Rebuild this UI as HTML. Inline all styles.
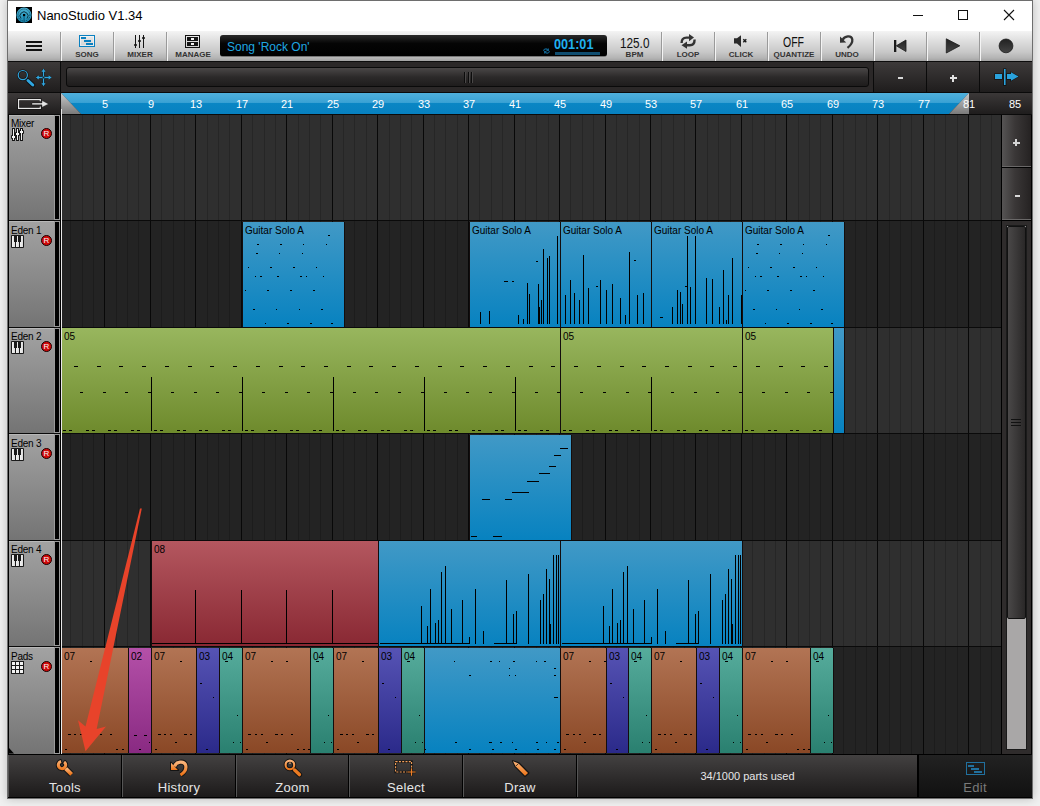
<!DOCTYPE html><html><head><meta charset='utf-8'><style>
*{box-sizing:border-box;margin:0;padding:0}
html,body{width:1040px;height:806px;overflow:hidden;background:#f0f0f0;font-family:"Liberation Sans", sans-serif}
.a{position:absolute}
.t{position:absolute;white-space:nowrap;line-height:1}
.sep{position:absolute;top:32px;width:2px;height:29px;background:#9a9a9a;border-right:1px solid #f4f4f4}
.lbl{position:absolute;top:51px;font-size:8px;font-weight:bold;color:#333;text-align:center;line-height:1;white-space:nowrap}
.db{position:absolute;background:linear-gradient(#3d3a3a,#1f1d1d);}
.hdr{position:absolute;left:8px;width:47px;background:linear-gradient(#a2a2a2,#747474);border-top:1px solid #b8b8b8}
.hname{position:absolute;left:11px;font-size:10px;color:#000;line-height:1}
.rec{position:absolute;left:41px;width:11px;height:11px;border-radius:50%;background:#d00808;border:1px solid #1a0000;color:#f4f4f4;font-size:8px;text-align:center;line-height:9px}
.clip{position:absolute;border-right:1px solid #130d0d}
.cl{position:absolute;left:2px;top:4px;font-size:10px;color:#000;line-height:1;white-space:nowrap}
.n{position:absolute;background:#000}
.bb{position:absolute;top:755px;height:42px;background:linear-gradient(#434141,#1c1a1a);border-left:1px solid #555;border-right:1px solid #000}
.bt{position:absolute;top:781px;width:100%;text-align:center;font-size:13px;color:#e6e6e6;line-height:1}
</style></head><body>
<div class='a' style='left:7px;top:0;width:1026px;height:799px;box-shadow:0 0 9px rgba(0,0,0,.22);background:#1a1818;border:1px solid #6e6e6e'></div>
<div class='a' style='left:8px;top:1px;width:1024px;height:30px;background:#fff'></div>
<svg class='a' style='left:16px;top:7px' width='16' height='16'><defs><linearGradient id='ig' x1='0' y1='0' x2='0' y2='1'><stop offset='0' stop-color='#4cb4d6'/><stop offset='1' stop-color='#1685ae'/></linearGradient></defs><rect width='16' height='16' fill='#000'/><circle cx='8' cy='8' r='7.6' fill='url(#ig)'/><circle cx='8' cy='8' r='6' fill='none' stroke='#0a2a38' stroke-width='.8' stroke-dasharray='1 1'/><path d='M5 11.5A4 4 0 1 1 11 11.5' fill='none' stroke='#0a2a38' stroke-width='.9'/><rect x='7' y='7' width='2.2' height='2.2' fill='#000'/><rect x='7.5' y='9' width='1.2' height='6.5' fill='#0e5f80'/></svg>
<div class='t' style='left:37px;top:9px;font-size:13px;color:#000'>NanoStudio V1.34</div>
<div class='a' style='left:913px;top:15px;width:10px;height:1px;background:#111'></div>
<div class='a' style='left:958px;top:10px;width:10px;height:10px;border:1px solid #111'></div>
<svg class='a' style='left:1003px;top:9px' width='12' height='12'><path d='M1 1L11 11M11 1L1 11' stroke='#111' stroke-width='1.1'/></svg>
<div class='a' style='left:8px;top:31px;width:1024px;height:31px;background:linear-gradient(#f4f4f4,#e0e0e0 30%,#c8c8c8 70%,#b4b4b4 90%,#a2a2a2);border-bottom:1px solid #0c0c0c'></div>
<div class='sep' style='left:60px'></div>
<div class='sep' style='left:113px'></div>
<div class='sep' style='left:166px'></div>
<div class='sep' style='left:661px'></div>
<div class='sep' style='left:714px'></div>
<div class='sep' style='left:767px'></div>
<div class='sep' style='left:820px'></div>
<div class='sep' style='left:873px'></div>
<div class='sep' style='left:926px'></div>
<div class='sep' style='left:979px'></div>
<div class='a' style='left:26px;top:41px;width:16px;height:2px;background:#111'></div>
<div class='a' style='left:26px;top:45px;width:16px;height:2px;background:#111'></div>
<div class='a' style='left:26px;top:49px;width:16px;height:2px;background:#111'></div>
<div class='a' style='left:79px;top:35px;width:16px;height:12px;border:1px solid #0a80c0;box-shadow:inset 0 0 0 1px rgba(255,255,255,.5)'></div>
<div class='a' style='left:81px;top:37px;width:5px;height:2px;background:#0a80c0'></div>
<div class='a' style='left:84px;top:40px;width:7px;height:2px;background:#0a80c0'></div>
<div class='a' style='left:86px;top:43px;width:7px;height:2px;background:#0a80c0'></div>
<div class='lbl' style='left:61px;width:52px'>SONG</div>
<div class='a' style='left:135px;top:35px;width:1px;height:13px;background:#151515'></div>
<div class='a' style='left:134px;top:44px;width:3px;height:2px;background:#151515;border-radius:1px'></div>
<div class='a' style='left:139px;top:35px;width:1px;height:13px;background:#151515'></div>
<div class='a' style='left:138px;top:40px;width:3px;height:2px;background:#151515;border-radius:1px'></div>
<div class='a' style='left:143px;top:35px;width:1px;height:13px;background:#151515'></div>
<div class='a' style='left:142px;top:37px;width:3px;height:2px;background:#151515;border-radius:1px'></div>
<div class='lbl' style='left:114px;width:52px'>MIXER</div>
<div class='a' style='left:185px;top:35px;width:15px;height:13px;border:1px solid #111'></div>
<div class='a' style='left:187px;top:37px;width:11px;height:4px;background:#151515'></div>
<div class='a' style='left:187px;top:42px;width:11px;height:4px;background:#151515'></div>
<div class='a' style='left:191px;top:38px;width:3px;height:2px;background:#f4f4f4'></div>
<div class='a' style='left:191px;top:43px;width:3px;height:2px;background:#f4f4f4'></div>
<div class='lbl' style='left:167px;width:52px'>MANAGE</div>
<div class='a' style='left:220px;top:35px;width:387px;height:22px;border-radius:3px;background:linear-gradient(#2a2a2a,#050505 40%,#000);border-bottom:1px solid #777'></div>
<div class='t' style='left:227px;top:41px;font-size:12px;color:#1fa8e2'>Song 'Rock On'</div>
<div class='t' style='left:554px;top:36px;font-size:15px;font-weight:bold;color:#1fb0ee;transform:scaleX(.845);transform-origin:0 0'>001:01</div>
<div class='a' style='left:555px;top:52px;width:45px;height:3px;background:#0f4d70'></div>
<svg class='a' style='left:542px;top:47px' width='9' height='8'><path d='M1 4a3 3 0 0 1 5-2l1-1v3h-3l1-1a2 2 0 0 0-3 1zM8 4a3 3 0 0 1-5 2l-1 1v-3h3l-1 1a2 2 0 0 0 3-1z' fill='#0f5f8a'/></svg>
<div class='t' style='left:620px;top:36px;font-size:14px;color:#111;transform:scaleX(.84);transform-origin:0 0'>125.0</div>
<div class='lbl' style='left:608px;width:53px'>BPM</div>
<svg class='a' style='left:676px;top:31px' width='24' height='18'><g fill='none' stroke='#333' stroke-width='2.4'><path d='M5.6 12 Q5.6 6.6 10.5 6.6 H14'/><path d='M18.6 8.5 Q18.6 14.2 13.8 14.2 H10'/></g><g fill='#333'><path d='M13 3L18 6.6L13 10.2z'/><path d='M11 10.6L5.5 14.2L11 17.8z'/></g></svg>
<div class='lbl' style='left:662px;width:52px'>LOOP</div>
<svg class='a' style='left:729px;top:31px' width='24' height='18'><path d='M5 7.2H8L12 4.2V15.9L8 12.6H5z' fill='#2a2a2a'/><path d='M14.3 8.3L17.3 11.3M17.3 8.3L14.3 11.3' stroke='#1a1a1a' stroke-width='1.4'/></svg>
<div class='lbl' style='left:715px;width:52px'>CLICK</div>
<div class='t' style='left:783px;top:35px;font-size:14px;color:#111;transform:scaleX(.75);transform-origin:0 0'>OFF</div>
<div class='lbl' style='left:768px;width:52px'>QUANTIZE</div>
<svg class='a' style='left:834px;top:31px' width='24' height='18'><path d='M6 5.5V11.7L12.2 11.5z' fill='#333'/><path d='M8.5 9 C10.5 4.8 17.5 3.8 18.3 8.5 C18.7 11.8 16.5 14.5 13.5 16.8' fill='none' stroke='#333' stroke-width='2.3'/></svg>
<div class='lbl' style='left:821px;width:52px'>UNDO</div>
<svg class='a' style='left:885px;top:33px' width='130' height='26'><defs><linearGradient id='tg' x1='0' y1='0' x2='0' y2='1'><stop offset='0' stop-color='#222'/><stop offset='1' stop-color='#444'/></linearGradient></defs><rect x='9' y='7' width='2.3' height='12' fill='#1a1a1a'/><path d='M21 7V18.5L11.3 12.8z' fill='url(#tg)' stroke='#1a1a1a' stroke-width='.8'/><path d='M61.3 5.8V20L74.8 12.8z' fill='url(#tg)' stroke='#1a1a1a' stroke-width='.8'/><circle cx='121' cy='12.9' r='6.9' fill='url(#tg)' stroke='#1a1a1a' stroke-width='.8'/></svg>
<div class='a' style='left:8px;top:62px;width:1024px;height:31px;background:#0a0a0a'></div>
<div class='db' style='left:8px;top:62px;width:52px;height:30px'></div>
<div class='a' style='left:61px;top:62px;width:812px;height:30px;background:#2b2828'></div>
<div class='a' style='left:66px;top:67px;width:803px;height:20px;border-radius:3px;border:1px solid #0a0a0a;background:linear-gradient(#4a4747,#2c2a2a 50%,#1e1c1c)'></div>
<div class='a' style='left:464px;top:72px;width:1px;height:11px;background:#0c0c0c;box-shadow:1px 0 0 #4a4848'></div>
<div class='a' style='left:468px;top:72px;width:1px;height:11px;background:#0c0c0c;box-shadow:1px 0 0 #4a4848'></div>
<div class='a' style='left:471px;top:72px;width:1px;height:11px;background:#0c0c0c;box-shadow:1px 0 0 #4a4848'></div>
<div class='db' style='left:874px;top:62px;width:52px;height:30px'></div>
<div class='db' style='left:927px;top:62px;width:52px;height:30px'></div>
<div class='db' style='left:980px;top:62px;width:52px;height:30px'></div>
<div class='a' style='left:898px;top:77px;width:5px;height:2px;background:#d8d8d8'></div>
<div class='a' style='left:950px;top:77px;width:7px;height:2px;background:#e0e0e0'></div><div class='a' style='left:952px;top:75px;width:2px;height:7px;background:#e0e0e0'></div>
<svg class='a' style='left:10px;top:64px' width='46' height='28'><g fill='none' stroke='#000' stroke-opacity='.55'><circle cx='12.8' cy='11.1' r='4.6' stroke-width='2.6'/><line x1='18' y1='16.5' x2='22.8' y2='21' stroke-width='4.8' stroke-linecap='round'/><path d='M33.5 5.5V21.5M26.2 13.5H41' stroke-width='3'/></g><g fill='none' stroke='#2fa6e0'><circle cx='12.8' cy='11.1' r='4.6' stroke-width='1.2'/><line x1='18' y1='16.5' x2='22.8' y2='21' stroke-width='3' stroke-linecap='round'/><path d='M33.5 6.5V20.5M27 13.5H40.5' stroke-width='1.3'/></g><g fill='#2fa6e0'><path d='M33.5 4.8l-2 3h4z'/><path d='M33.5 22.2l-2-3h4z'/><path d='M25.8 13.5l3-2v4z'/><path d='M41.6 13.5l-3-2v4z'/></g><circle cx='33.5' cy='13.5' r='1' fill='#222'/></svg>
<svg class='a' style='left:985px;top:64px' width='46' height='28'><g fill='#000' fill-opacity='.6'><rect x='9.3' y='9.3' width='8.4' height='6.4'/><rect x='18.3' y='4.3' width='3' height='17.4'/><path d='M21.3 9.3H25.3V7.2L34.5 12.5L25.3 17.8V15.7H21.3z'/></g><g fill='#2aa2dc'><rect x='10' y='10' width='7' height='5'/><rect x='19' y='5' width='1.6' height='16'/><path d='M22 10H26V8.3L33.6 12.5L26 16.7V15H22z'/></g></svg>
<div class='db' style='left:8px;top:93px;width:52px;height:21px'></div>
<svg class='a' style='left:10px;top:92px' width='46' height='22'><path d='M30.3 9.3V7.6H8.6V16.3H30.3V14.6' fill='none' stroke='#000' stroke-opacity='.6' stroke-width='2.6'/><path d='M30.3 9.3V7.6H8.6V16.3H30.3V14.6' fill='none' stroke='#e6e6e6' stroke-width='1.2'/><path d='M22 11H32V8.6L38.5 11.9L32 15.2V12.8H22z' fill='#e6e6e6' stroke='#000' stroke-opacity='.5' stroke-width='.6'/></svg>
<div class='a' style='left:61px;top:93px;width:971px;height:21px;background:linear-gradient(#3b3838,#1f1d1d)'></div>
<div class='a' style='left:61px;top:93px;width:908px;height:21px;background:linear-gradient(#4fb0dc,#3aa2d4 45%,#0a86c4 50%,#0781c0);clip-path:polygon(0 0,100% 0,calc(100% - 20px) 100%,20px 100%)'></div>
<div class='a' style='left:61px;top:93px;width:20px;height:21px;background:linear-gradient(#c8c8c8,#7a7a7a);clip-path:polygon(0 0,100% 100%,0 100%)'></div>
<div class='a' style='left:949px;top:93px;width:20px;height:21px;background:linear-gradient(#c8c8c8,#7a7a7a);clip-path:polygon(100% 0,100% 100%,0 100%)'></div>
<div class='t' style='left:90px;top:99px;width:30px;text-align:center;font-size:11px;color:#fff'>5</div>
<div class='t' style='left:136px;top:99px;width:30px;text-align:center;font-size:11px;color:#fff'>9</div>
<div class='t' style='left:181px;top:99px;width:30px;text-align:center;font-size:11px;color:#fff'>13</div>
<div class='t' style='left:227px;top:99px;width:30px;text-align:center;font-size:11px;color:#fff'>17</div>
<div class='t' style='left:272px;top:99px;width:30px;text-align:center;font-size:11px;color:#fff'>21</div>
<div class='t' style='left:318px;top:99px;width:30px;text-align:center;font-size:11px;color:#fff'>25</div>
<div class='t' style='left:363px;top:99px;width:30px;text-align:center;font-size:11px;color:#fff'>29</div>
<div class='t' style='left:409px;top:99px;width:30px;text-align:center;font-size:11px;color:#fff'>33</div>
<div class='t' style='left:454px;top:99px;width:30px;text-align:center;font-size:11px;color:#fff'>37</div>
<div class='t' style='left:500px;top:99px;width:30px;text-align:center;font-size:11px;color:#fff'>41</div>
<div class='t' style='left:545px;top:99px;width:30px;text-align:center;font-size:11px;color:#fff'>45</div>
<div class='t' style='left:591px;top:99px;width:30px;text-align:center;font-size:11px;color:#fff'>49</div>
<div class='t' style='left:636px;top:99px;width:30px;text-align:center;font-size:11px;color:#fff'>53</div>
<div class='t' style='left:681px;top:99px;width:30px;text-align:center;font-size:11px;color:#fff'>57</div>
<div class='t' style='left:727px;top:99px;width:30px;text-align:center;font-size:11px;color:#fff'>61</div>
<div class='t' style='left:772px;top:99px;width:30px;text-align:center;font-size:11px;color:#fff'>65</div>
<div class='t' style='left:818px;top:99px;width:30px;text-align:center;font-size:11px;color:#fff'>69</div>
<div class='t' style='left:863px;top:99px;width:30px;text-align:center;font-size:11px;color:#fff'>73</div>
<div class='t' style='left:909px;top:99px;width:30px;text-align:center;font-size:11px;color:#fff'>77</div>
<div class='t' style='left:954px;top:99px;width:30px;text-align:center;font-size:11px;color:#fff'>81</div>
<div class='t' style='left:1000px;top:99px;width:30px;text-align:center;font-size:11px;color:#fff'>85</div>
<div class='a' style='left:8px;top:114px;width:1024px;height:1px;background:#0a0a0a'></div>
<div class='a' style='left:62px;top:115px;width:940px;height:105px;background:#2f2f2f'></div>
<div class='a' style='left:70px;top:115px;width:1px;height:105px;background:#262626'></div>
<div class='a' style='left:82px;top:115px;width:1px;height:105px;background:#262626'></div>
<div class='a' style='left:93px;top:115px;width:1px;height:105px;background:#262626'></div>
<div class='a' style='left:104px;top:115px;width:1px;height:105px;background:#080808'></div>
<div class='a' style='left:116px;top:115px;width:1px;height:105px;background:#262626'></div>
<div class='a' style='left:127px;top:115px;width:1px;height:105px;background:#262626'></div>
<div class='a' style='left:138px;top:115px;width:1px;height:105px;background:#262626'></div>
<div class='a' style='left:150px;top:115px;width:1px;height:105px;background:#080808'></div>
<div class='a' style='left:161px;top:115px;width:1px;height:105px;background:#262626'></div>
<div class='a' style='left:173px;top:115px;width:1px;height:105px;background:#262626'></div>
<div class='a' style='left:184px;top:115px;width:1px;height:105px;background:#262626'></div>
<div class='a' style='left:195px;top:115px;width:1px;height:105px;background:#080808'></div>
<div class='a' style='left:207px;top:115px;width:1px;height:105px;background:#262626'></div>
<div class='a' style='left:218px;top:115px;width:1px;height:105px;background:#262626'></div>
<div class='a' style='left:229px;top:115px;width:1px;height:105px;background:#262626'></div>
<div class='a' style='left:241px;top:115px;width:1px;height:105px;background:#080808'></div>
<div class='a' style='left:252px;top:115px;width:1px;height:105px;background:#262626'></div>
<div class='a' style='left:264px;top:115px;width:1px;height:105px;background:#262626'></div>
<div class='a' style='left:275px;top:115px;width:1px;height:105px;background:#262626'></div>
<div class='a' style='left:286px;top:115px;width:1px;height:105px;background:#080808'></div>
<div class='a' style='left:298px;top:115px;width:1px;height:105px;background:#262626'></div>
<div class='a' style='left:309px;top:115px;width:1px;height:105px;background:#262626'></div>
<div class='a' style='left:320px;top:115px;width:1px;height:105px;background:#262626'></div>
<div class='a' style='left:332px;top:115px;width:1px;height:105px;background:#080808'></div>
<div class='a' style='left:343px;top:115px;width:1px;height:105px;background:#262626'></div>
<div class='a' style='left:354px;top:115px;width:1px;height:105px;background:#262626'></div>
<div class='a' style='left:366px;top:115px;width:1px;height:105px;background:#262626'></div>
<div class='a' style='left:377px;top:115px;width:1px;height:105px;background:#080808'></div>
<div class='a' style='left:389px;top:115px;width:1px;height:105px;background:#262626'></div>
<div class='a' style='left:400px;top:115px;width:1px;height:105px;background:#262626'></div>
<div class='a' style='left:411px;top:115px;width:1px;height:105px;background:#262626'></div>
<div class='a' style='left:423px;top:115px;width:1px;height:105px;background:#080808'></div>
<div class='a' style='left:434px;top:115px;width:1px;height:105px;background:#262626'></div>
<div class='a' style='left:445px;top:115px;width:1px;height:105px;background:#262626'></div>
<div class='a' style='left:457px;top:115px;width:1px;height:105px;background:#262626'></div>
<div class='a' style='left:468px;top:115px;width:1px;height:105px;background:#080808'></div>
<div class='a' style='left:479px;top:115px;width:1px;height:105px;background:#262626'></div>
<div class='a' style='left:491px;top:115px;width:1px;height:105px;background:#262626'></div>
<div class='a' style='left:502px;top:115px;width:1px;height:105px;background:#262626'></div>
<div class='a' style='left:514px;top:115px;width:1px;height:105px;background:#080808'></div>
<div class='a' style='left:525px;top:115px;width:1px;height:105px;background:#262626'></div>
<div class='a' style='left:536px;top:115px;width:1px;height:105px;background:#262626'></div>
<div class='a' style='left:548px;top:115px;width:1px;height:105px;background:#262626'></div>
<div class='a' style='left:559px;top:115px;width:1px;height:105px;background:#080808'></div>
<div class='a' style='left:570px;top:115px;width:1px;height:105px;background:#262626'></div>
<div class='a' style='left:582px;top:115px;width:1px;height:105px;background:#262626'></div>
<div class='a' style='left:593px;top:115px;width:1px;height:105px;background:#262626'></div>
<div class='a' style='left:605px;top:115px;width:1px;height:105px;background:#080808'></div>
<div class='a' style='left:616px;top:115px;width:1px;height:105px;background:#262626'></div>
<div class='a' style='left:627px;top:115px;width:1px;height:105px;background:#262626'></div>
<div class='a' style='left:639px;top:115px;width:1px;height:105px;background:#262626'></div>
<div class='a' style='left:650px;top:115px;width:1px;height:105px;background:#080808'></div>
<div class='a' style='left:661px;top:115px;width:1px;height:105px;background:#262626'></div>
<div class='a' style='left:673px;top:115px;width:1px;height:105px;background:#262626'></div>
<div class='a' style='left:684px;top:115px;width:1px;height:105px;background:#262626'></div>
<div class='a' style='left:695px;top:115px;width:1px;height:105px;background:#080808'></div>
<div class='a' style='left:707px;top:115px;width:1px;height:105px;background:#262626'></div>
<div class='a' style='left:718px;top:115px;width:1px;height:105px;background:#262626'></div>
<div class='a' style='left:730px;top:115px;width:1px;height:105px;background:#262626'></div>
<div class='a' style='left:741px;top:115px;width:1px;height:105px;background:#080808'></div>
<div class='a' style='left:752px;top:115px;width:1px;height:105px;background:#262626'></div>
<div class='a' style='left:764px;top:115px;width:1px;height:105px;background:#262626'></div>
<div class='a' style='left:775px;top:115px;width:1px;height:105px;background:#262626'></div>
<div class='a' style='left:786px;top:115px;width:1px;height:105px;background:#080808'></div>
<div class='a' style='left:798px;top:115px;width:1px;height:105px;background:#262626'></div>
<div class='a' style='left:809px;top:115px;width:1px;height:105px;background:#262626'></div>
<div class='a' style='left:820px;top:115px;width:1px;height:105px;background:#262626'></div>
<div class='a' style='left:832px;top:115px;width:1px;height:105px;background:#080808'></div>
<div class='a' style='left:843px;top:115px;width:1px;height:105px;background:#262626'></div>
<div class='a' style='left:855px;top:115px;width:1px;height:105px;background:#262626'></div>
<div class='a' style='left:866px;top:115px;width:1px;height:105px;background:#262626'></div>
<div class='a' style='left:877px;top:115px;width:1px;height:105px;background:#080808'></div>
<div class='a' style='left:889px;top:115px;width:1px;height:105px;background:#262626'></div>
<div class='a' style='left:900px;top:115px;width:1px;height:105px;background:#262626'></div>
<div class='a' style='left:911px;top:115px;width:1px;height:105px;background:#262626'></div>
<div class='a' style='left:923px;top:115px;width:1px;height:105px;background:#080808'></div>
<div class='a' style='left:934px;top:115px;width:1px;height:105px;background:#262626'></div>
<div class='a' style='left:945px;top:115px;width:1px;height:105px;background:#262626'></div>
<div class='a' style='left:957px;top:115px;width:1px;height:105px;background:#262626'></div>
<div class='a' style='left:968px;top:115px;width:1px;height:105px;background:#080808'></div>
<div class='a' style='left:980px;top:115px;width:1px;height:105px;background:#262626'></div>
<div class='a' style='left:991px;top:115px;width:1px;height:105px;background:#262626'></div>
<div class='a' style='left:8px;top:220px;width:994px;height:1px;background:#0a0a0a'></div>
<div class='hdr' style='top:115px;height:105px'></div>
<div class='a' style='left:55px;top:116px;width:4px;height:103px;background:#000;outline:1px solid #9a9a9a'></div>
<div class='hname' style='top:119px;letter-spacing:-.25px'>Mixer</div>
<div class='rec' style='top:128px'>R</div>
<div class='a' style='left:62px;top:221px;width:940px;height:106px;background:#232323'></div>
<div class='a' style='left:70px;top:221px;width:1px;height:106px;background:#1c1c1c'></div>
<div class='a' style='left:82px;top:221px;width:1px;height:106px;background:#1c1c1c'></div>
<div class='a' style='left:93px;top:221px;width:1px;height:106px;background:#1c1c1c'></div>
<div class='a' style='left:104px;top:221px;width:1px;height:106px;background:#080808'></div>
<div class='a' style='left:116px;top:221px;width:1px;height:106px;background:#1c1c1c'></div>
<div class='a' style='left:127px;top:221px;width:1px;height:106px;background:#1c1c1c'></div>
<div class='a' style='left:138px;top:221px;width:1px;height:106px;background:#1c1c1c'></div>
<div class='a' style='left:150px;top:221px;width:1px;height:106px;background:#080808'></div>
<div class='a' style='left:161px;top:221px;width:1px;height:106px;background:#1c1c1c'></div>
<div class='a' style='left:173px;top:221px;width:1px;height:106px;background:#1c1c1c'></div>
<div class='a' style='left:184px;top:221px;width:1px;height:106px;background:#1c1c1c'></div>
<div class='a' style='left:195px;top:221px;width:1px;height:106px;background:#080808'></div>
<div class='a' style='left:207px;top:221px;width:1px;height:106px;background:#1c1c1c'></div>
<div class='a' style='left:218px;top:221px;width:1px;height:106px;background:#1c1c1c'></div>
<div class='a' style='left:229px;top:221px;width:1px;height:106px;background:#1c1c1c'></div>
<div class='a' style='left:241px;top:221px;width:1px;height:106px;background:#080808'></div>
<div class='a' style='left:252px;top:221px;width:1px;height:106px;background:#1c1c1c'></div>
<div class='a' style='left:264px;top:221px;width:1px;height:106px;background:#1c1c1c'></div>
<div class='a' style='left:275px;top:221px;width:1px;height:106px;background:#1c1c1c'></div>
<div class='a' style='left:286px;top:221px;width:1px;height:106px;background:#080808'></div>
<div class='a' style='left:298px;top:221px;width:1px;height:106px;background:#1c1c1c'></div>
<div class='a' style='left:309px;top:221px;width:1px;height:106px;background:#1c1c1c'></div>
<div class='a' style='left:320px;top:221px;width:1px;height:106px;background:#1c1c1c'></div>
<div class='a' style='left:332px;top:221px;width:1px;height:106px;background:#080808'></div>
<div class='a' style='left:343px;top:221px;width:1px;height:106px;background:#1c1c1c'></div>
<div class='a' style='left:354px;top:221px;width:1px;height:106px;background:#1c1c1c'></div>
<div class='a' style='left:366px;top:221px;width:1px;height:106px;background:#1c1c1c'></div>
<div class='a' style='left:377px;top:221px;width:1px;height:106px;background:#080808'></div>
<div class='a' style='left:389px;top:221px;width:1px;height:106px;background:#1c1c1c'></div>
<div class='a' style='left:400px;top:221px;width:1px;height:106px;background:#1c1c1c'></div>
<div class='a' style='left:411px;top:221px;width:1px;height:106px;background:#1c1c1c'></div>
<div class='a' style='left:423px;top:221px;width:1px;height:106px;background:#080808'></div>
<div class='a' style='left:434px;top:221px;width:1px;height:106px;background:#1c1c1c'></div>
<div class='a' style='left:445px;top:221px;width:1px;height:106px;background:#1c1c1c'></div>
<div class='a' style='left:457px;top:221px;width:1px;height:106px;background:#1c1c1c'></div>
<div class='a' style='left:468px;top:221px;width:1px;height:106px;background:#080808'></div>
<div class='a' style='left:479px;top:221px;width:1px;height:106px;background:#1c1c1c'></div>
<div class='a' style='left:491px;top:221px;width:1px;height:106px;background:#1c1c1c'></div>
<div class='a' style='left:502px;top:221px;width:1px;height:106px;background:#1c1c1c'></div>
<div class='a' style='left:514px;top:221px;width:1px;height:106px;background:#080808'></div>
<div class='a' style='left:525px;top:221px;width:1px;height:106px;background:#1c1c1c'></div>
<div class='a' style='left:536px;top:221px;width:1px;height:106px;background:#1c1c1c'></div>
<div class='a' style='left:548px;top:221px;width:1px;height:106px;background:#1c1c1c'></div>
<div class='a' style='left:559px;top:221px;width:1px;height:106px;background:#080808'></div>
<div class='a' style='left:570px;top:221px;width:1px;height:106px;background:#1c1c1c'></div>
<div class='a' style='left:582px;top:221px;width:1px;height:106px;background:#1c1c1c'></div>
<div class='a' style='left:593px;top:221px;width:1px;height:106px;background:#1c1c1c'></div>
<div class='a' style='left:605px;top:221px;width:1px;height:106px;background:#080808'></div>
<div class='a' style='left:616px;top:221px;width:1px;height:106px;background:#1c1c1c'></div>
<div class='a' style='left:627px;top:221px;width:1px;height:106px;background:#1c1c1c'></div>
<div class='a' style='left:639px;top:221px;width:1px;height:106px;background:#1c1c1c'></div>
<div class='a' style='left:650px;top:221px;width:1px;height:106px;background:#080808'></div>
<div class='a' style='left:661px;top:221px;width:1px;height:106px;background:#1c1c1c'></div>
<div class='a' style='left:673px;top:221px;width:1px;height:106px;background:#1c1c1c'></div>
<div class='a' style='left:684px;top:221px;width:1px;height:106px;background:#1c1c1c'></div>
<div class='a' style='left:695px;top:221px;width:1px;height:106px;background:#080808'></div>
<div class='a' style='left:707px;top:221px;width:1px;height:106px;background:#1c1c1c'></div>
<div class='a' style='left:718px;top:221px;width:1px;height:106px;background:#1c1c1c'></div>
<div class='a' style='left:730px;top:221px;width:1px;height:106px;background:#1c1c1c'></div>
<div class='a' style='left:741px;top:221px;width:1px;height:106px;background:#080808'></div>
<div class='a' style='left:752px;top:221px;width:1px;height:106px;background:#1c1c1c'></div>
<div class='a' style='left:764px;top:221px;width:1px;height:106px;background:#1c1c1c'></div>
<div class='a' style='left:775px;top:221px;width:1px;height:106px;background:#1c1c1c'></div>
<div class='a' style='left:786px;top:221px;width:1px;height:106px;background:#080808'></div>
<div class='a' style='left:798px;top:221px;width:1px;height:106px;background:#1c1c1c'></div>
<div class='a' style='left:809px;top:221px;width:1px;height:106px;background:#1c1c1c'></div>
<div class='a' style='left:820px;top:221px;width:1px;height:106px;background:#1c1c1c'></div>
<div class='a' style='left:832px;top:221px;width:1px;height:106px;background:#080808'></div>
<div class='a' style='left:843px;top:221px;width:1px;height:106px;background:#1c1c1c'></div>
<div class='a' style='left:855px;top:221px;width:1px;height:106px;background:#1c1c1c'></div>
<div class='a' style='left:866px;top:221px;width:1px;height:106px;background:#1c1c1c'></div>
<div class='a' style='left:877px;top:221px;width:1px;height:106px;background:#080808'></div>
<div class='a' style='left:889px;top:221px;width:1px;height:106px;background:#1c1c1c'></div>
<div class='a' style='left:900px;top:221px;width:1px;height:106px;background:#1c1c1c'></div>
<div class='a' style='left:911px;top:221px;width:1px;height:106px;background:#1c1c1c'></div>
<div class='a' style='left:923px;top:221px;width:1px;height:106px;background:#080808'></div>
<div class='a' style='left:934px;top:221px;width:1px;height:106px;background:#1c1c1c'></div>
<div class='a' style='left:945px;top:221px;width:1px;height:106px;background:#1c1c1c'></div>
<div class='a' style='left:957px;top:221px;width:1px;height:106px;background:#1c1c1c'></div>
<div class='a' style='left:968px;top:221px;width:1px;height:106px;background:#080808'></div>
<div class='a' style='left:980px;top:221px;width:1px;height:106px;background:#1c1c1c'></div>
<div class='a' style='left:991px;top:221px;width:1px;height:106px;background:#1c1c1c'></div>
<div class='a' style='left:8px;top:327px;width:994px;height:1px;background:#0a0a0a'></div>
<div class='hdr' style='top:221px;height:106px'></div>
<div class='a' style='left:55px;top:222px;width:4px;height:104px;background:#000;outline:1px solid #9a9a9a'></div>
<div class='hname' style='top:226px;letter-spacing:-.25px'>Eden 1</div>
<div class='rec' style='top:235px'>R</div>
<div class='a' style='left:62px;top:328px;width:940px;height:105px;background:#2f2f2f'></div>
<div class='a' style='left:70px;top:328px;width:1px;height:105px;background:#262626'></div>
<div class='a' style='left:82px;top:328px;width:1px;height:105px;background:#262626'></div>
<div class='a' style='left:93px;top:328px;width:1px;height:105px;background:#262626'></div>
<div class='a' style='left:104px;top:328px;width:1px;height:105px;background:#080808'></div>
<div class='a' style='left:116px;top:328px;width:1px;height:105px;background:#262626'></div>
<div class='a' style='left:127px;top:328px;width:1px;height:105px;background:#262626'></div>
<div class='a' style='left:138px;top:328px;width:1px;height:105px;background:#262626'></div>
<div class='a' style='left:150px;top:328px;width:1px;height:105px;background:#080808'></div>
<div class='a' style='left:161px;top:328px;width:1px;height:105px;background:#262626'></div>
<div class='a' style='left:173px;top:328px;width:1px;height:105px;background:#262626'></div>
<div class='a' style='left:184px;top:328px;width:1px;height:105px;background:#262626'></div>
<div class='a' style='left:195px;top:328px;width:1px;height:105px;background:#080808'></div>
<div class='a' style='left:207px;top:328px;width:1px;height:105px;background:#262626'></div>
<div class='a' style='left:218px;top:328px;width:1px;height:105px;background:#262626'></div>
<div class='a' style='left:229px;top:328px;width:1px;height:105px;background:#262626'></div>
<div class='a' style='left:241px;top:328px;width:1px;height:105px;background:#080808'></div>
<div class='a' style='left:252px;top:328px;width:1px;height:105px;background:#262626'></div>
<div class='a' style='left:264px;top:328px;width:1px;height:105px;background:#262626'></div>
<div class='a' style='left:275px;top:328px;width:1px;height:105px;background:#262626'></div>
<div class='a' style='left:286px;top:328px;width:1px;height:105px;background:#080808'></div>
<div class='a' style='left:298px;top:328px;width:1px;height:105px;background:#262626'></div>
<div class='a' style='left:309px;top:328px;width:1px;height:105px;background:#262626'></div>
<div class='a' style='left:320px;top:328px;width:1px;height:105px;background:#262626'></div>
<div class='a' style='left:332px;top:328px;width:1px;height:105px;background:#080808'></div>
<div class='a' style='left:343px;top:328px;width:1px;height:105px;background:#262626'></div>
<div class='a' style='left:354px;top:328px;width:1px;height:105px;background:#262626'></div>
<div class='a' style='left:366px;top:328px;width:1px;height:105px;background:#262626'></div>
<div class='a' style='left:377px;top:328px;width:1px;height:105px;background:#080808'></div>
<div class='a' style='left:389px;top:328px;width:1px;height:105px;background:#262626'></div>
<div class='a' style='left:400px;top:328px;width:1px;height:105px;background:#262626'></div>
<div class='a' style='left:411px;top:328px;width:1px;height:105px;background:#262626'></div>
<div class='a' style='left:423px;top:328px;width:1px;height:105px;background:#080808'></div>
<div class='a' style='left:434px;top:328px;width:1px;height:105px;background:#262626'></div>
<div class='a' style='left:445px;top:328px;width:1px;height:105px;background:#262626'></div>
<div class='a' style='left:457px;top:328px;width:1px;height:105px;background:#262626'></div>
<div class='a' style='left:468px;top:328px;width:1px;height:105px;background:#080808'></div>
<div class='a' style='left:479px;top:328px;width:1px;height:105px;background:#262626'></div>
<div class='a' style='left:491px;top:328px;width:1px;height:105px;background:#262626'></div>
<div class='a' style='left:502px;top:328px;width:1px;height:105px;background:#262626'></div>
<div class='a' style='left:514px;top:328px;width:1px;height:105px;background:#080808'></div>
<div class='a' style='left:525px;top:328px;width:1px;height:105px;background:#262626'></div>
<div class='a' style='left:536px;top:328px;width:1px;height:105px;background:#262626'></div>
<div class='a' style='left:548px;top:328px;width:1px;height:105px;background:#262626'></div>
<div class='a' style='left:559px;top:328px;width:1px;height:105px;background:#080808'></div>
<div class='a' style='left:570px;top:328px;width:1px;height:105px;background:#262626'></div>
<div class='a' style='left:582px;top:328px;width:1px;height:105px;background:#262626'></div>
<div class='a' style='left:593px;top:328px;width:1px;height:105px;background:#262626'></div>
<div class='a' style='left:605px;top:328px;width:1px;height:105px;background:#080808'></div>
<div class='a' style='left:616px;top:328px;width:1px;height:105px;background:#262626'></div>
<div class='a' style='left:627px;top:328px;width:1px;height:105px;background:#262626'></div>
<div class='a' style='left:639px;top:328px;width:1px;height:105px;background:#262626'></div>
<div class='a' style='left:650px;top:328px;width:1px;height:105px;background:#080808'></div>
<div class='a' style='left:661px;top:328px;width:1px;height:105px;background:#262626'></div>
<div class='a' style='left:673px;top:328px;width:1px;height:105px;background:#262626'></div>
<div class='a' style='left:684px;top:328px;width:1px;height:105px;background:#262626'></div>
<div class='a' style='left:695px;top:328px;width:1px;height:105px;background:#080808'></div>
<div class='a' style='left:707px;top:328px;width:1px;height:105px;background:#262626'></div>
<div class='a' style='left:718px;top:328px;width:1px;height:105px;background:#262626'></div>
<div class='a' style='left:730px;top:328px;width:1px;height:105px;background:#262626'></div>
<div class='a' style='left:741px;top:328px;width:1px;height:105px;background:#080808'></div>
<div class='a' style='left:752px;top:328px;width:1px;height:105px;background:#262626'></div>
<div class='a' style='left:764px;top:328px;width:1px;height:105px;background:#262626'></div>
<div class='a' style='left:775px;top:328px;width:1px;height:105px;background:#262626'></div>
<div class='a' style='left:786px;top:328px;width:1px;height:105px;background:#080808'></div>
<div class='a' style='left:798px;top:328px;width:1px;height:105px;background:#262626'></div>
<div class='a' style='left:809px;top:328px;width:1px;height:105px;background:#262626'></div>
<div class='a' style='left:820px;top:328px;width:1px;height:105px;background:#262626'></div>
<div class='a' style='left:832px;top:328px;width:1px;height:105px;background:#080808'></div>
<div class='a' style='left:843px;top:328px;width:1px;height:105px;background:#262626'></div>
<div class='a' style='left:855px;top:328px;width:1px;height:105px;background:#262626'></div>
<div class='a' style='left:866px;top:328px;width:1px;height:105px;background:#262626'></div>
<div class='a' style='left:877px;top:328px;width:1px;height:105px;background:#080808'></div>
<div class='a' style='left:889px;top:328px;width:1px;height:105px;background:#262626'></div>
<div class='a' style='left:900px;top:328px;width:1px;height:105px;background:#262626'></div>
<div class='a' style='left:911px;top:328px;width:1px;height:105px;background:#262626'></div>
<div class='a' style='left:923px;top:328px;width:1px;height:105px;background:#080808'></div>
<div class='a' style='left:934px;top:328px;width:1px;height:105px;background:#262626'></div>
<div class='a' style='left:945px;top:328px;width:1px;height:105px;background:#262626'></div>
<div class='a' style='left:957px;top:328px;width:1px;height:105px;background:#262626'></div>
<div class='a' style='left:968px;top:328px;width:1px;height:105px;background:#080808'></div>
<div class='a' style='left:980px;top:328px;width:1px;height:105px;background:#262626'></div>
<div class='a' style='left:991px;top:328px;width:1px;height:105px;background:#262626'></div>
<div class='a' style='left:8px;top:433px;width:994px;height:1px;background:#0a0a0a'></div>
<div class='hdr' style='top:328px;height:105px'></div>
<div class='a' style='left:55px;top:329px;width:4px;height:103px;background:#000;outline:1px solid #9a9a9a'></div>
<div class='hname' style='top:332px;letter-spacing:-.25px'>Eden 2</div>
<div class='rec' style='top:341px'>R</div>
<div class='a' style='left:62px;top:434px;width:940px;height:106px;background:#232323'></div>
<div class='a' style='left:70px;top:434px;width:1px;height:106px;background:#1c1c1c'></div>
<div class='a' style='left:82px;top:434px;width:1px;height:106px;background:#1c1c1c'></div>
<div class='a' style='left:93px;top:434px;width:1px;height:106px;background:#1c1c1c'></div>
<div class='a' style='left:104px;top:434px;width:1px;height:106px;background:#080808'></div>
<div class='a' style='left:116px;top:434px;width:1px;height:106px;background:#1c1c1c'></div>
<div class='a' style='left:127px;top:434px;width:1px;height:106px;background:#1c1c1c'></div>
<div class='a' style='left:138px;top:434px;width:1px;height:106px;background:#1c1c1c'></div>
<div class='a' style='left:150px;top:434px;width:1px;height:106px;background:#080808'></div>
<div class='a' style='left:161px;top:434px;width:1px;height:106px;background:#1c1c1c'></div>
<div class='a' style='left:173px;top:434px;width:1px;height:106px;background:#1c1c1c'></div>
<div class='a' style='left:184px;top:434px;width:1px;height:106px;background:#1c1c1c'></div>
<div class='a' style='left:195px;top:434px;width:1px;height:106px;background:#080808'></div>
<div class='a' style='left:207px;top:434px;width:1px;height:106px;background:#1c1c1c'></div>
<div class='a' style='left:218px;top:434px;width:1px;height:106px;background:#1c1c1c'></div>
<div class='a' style='left:229px;top:434px;width:1px;height:106px;background:#1c1c1c'></div>
<div class='a' style='left:241px;top:434px;width:1px;height:106px;background:#080808'></div>
<div class='a' style='left:252px;top:434px;width:1px;height:106px;background:#1c1c1c'></div>
<div class='a' style='left:264px;top:434px;width:1px;height:106px;background:#1c1c1c'></div>
<div class='a' style='left:275px;top:434px;width:1px;height:106px;background:#1c1c1c'></div>
<div class='a' style='left:286px;top:434px;width:1px;height:106px;background:#080808'></div>
<div class='a' style='left:298px;top:434px;width:1px;height:106px;background:#1c1c1c'></div>
<div class='a' style='left:309px;top:434px;width:1px;height:106px;background:#1c1c1c'></div>
<div class='a' style='left:320px;top:434px;width:1px;height:106px;background:#1c1c1c'></div>
<div class='a' style='left:332px;top:434px;width:1px;height:106px;background:#080808'></div>
<div class='a' style='left:343px;top:434px;width:1px;height:106px;background:#1c1c1c'></div>
<div class='a' style='left:354px;top:434px;width:1px;height:106px;background:#1c1c1c'></div>
<div class='a' style='left:366px;top:434px;width:1px;height:106px;background:#1c1c1c'></div>
<div class='a' style='left:377px;top:434px;width:1px;height:106px;background:#080808'></div>
<div class='a' style='left:389px;top:434px;width:1px;height:106px;background:#1c1c1c'></div>
<div class='a' style='left:400px;top:434px;width:1px;height:106px;background:#1c1c1c'></div>
<div class='a' style='left:411px;top:434px;width:1px;height:106px;background:#1c1c1c'></div>
<div class='a' style='left:423px;top:434px;width:1px;height:106px;background:#080808'></div>
<div class='a' style='left:434px;top:434px;width:1px;height:106px;background:#1c1c1c'></div>
<div class='a' style='left:445px;top:434px;width:1px;height:106px;background:#1c1c1c'></div>
<div class='a' style='left:457px;top:434px;width:1px;height:106px;background:#1c1c1c'></div>
<div class='a' style='left:468px;top:434px;width:1px;height:106px;background:#080808'></div>
<div class='a' style='left:479px;top:434px;width:1px;height:106px;background:#1c1c1c'></div>
<div class='a' style='left:491px;top:434px;width:1px;height:106px;background:#1c1c1c'></div>
<div class='a' style='left:502px;top:434px;width:1px;height:106px;background:#1c1c1c'></div>
<div class='a' style='left:514px;top:434px;width:1px;height:106px;background:#080808'></div>
<div class='a' style='left:525px;top:434px;width:1px;height:106px;background:#1c1c1c'></div>
<div class='a' style='left:536px;top:434px;width:1px;height:106px;background:#1c1c1c'></div>
<div class='a' style='left:548px;top:434px;width:1px;height:106px;background:#1c1c1c'></div>
<div class='a' style='left:559px;top:434px;width:1px;height:106px;background:#080808'></div>
<div class='a' style='left:570px;top:434px;width:1px;height:106px;background:#1c1c1c'></div>
<div class='a' style='left:582px;top:434px;width:1px;height:106px;background:#1c1c1c'></div>
<div class='a' style='left:593px;top:434px;width:1px;height:106px;background:#1c1c1c'></div>
<div class='a' style='left:605px;top:434px;width:1px;height:106px;background:#080808'></div>
<div class='a' style='left:616px;top:434px;width:1px;height:106px;background:#1c1c1c'></div>
<div class='a' style='left:627px;top:434px;width:1px;height:106px;background:#1c1c1c'></div>
<div class='a' style='left:639px;top:434px;width:1px;height:106px;background:#1c1c1c'></div>
<div class='a' style='left:650px;top:434px;width:1px;height:106px;background:#080808'></div>
<div class='a' style='left:661px;top:434px;width:1px;height:106px;background:#1c1c1c'></div>
<div class='a' style='left:673px;top:434px;width:1px;height:106px;background:#1c1c1c'></div>
<div class='a' style='left:684px;top:434px;width:1px;height:106px;background:#1c1c1c'></div>
<div class='a' style='left:695px;top:434px;width:1px;height:106px;background:#080808'></div>
<div class='a' style='left:707px;top:434px;width:1px;height:106px;background:#1c1c1c'></div>
<div class='a' style='left:718px;top:434px;width:1px;height:106px;background:#1c1c1c'></div>
<div class='a' style='left:730px;top:434px;width:1px;height:106px;background:#1c1c1c'></div>
<div class='a' style='left:741px;top:434px;width:1px;height:106px;background:#080808'></div>
<div class='a' style='left:752px;top:434px;width:1px;height:106px;background:#1c1c1c'></div>
<div class='a' style='left:764px;top:434px;width:1px;height:106px;background:#1c1c1c'></div>
<div class='a' style='left:775px;top:434px;width:1px;height:106px;background:#1c1c1c'></div>
<div class='a' style='left:786px;top:434px;width:1px;height:106px;background:#080808'></div>
<div class='a' style='left:798px;top:434px;width:1px;height:106px;background:#1c1c1c'></div>
<div class='a' style='left:809px;top:434px;width:1px;height:106px;background:#1c1c1c'></div>
<div class='a' style='left:820px;top:434px;width:1px;height:106px;background:#1c1c1c'></div>
<div class='a' style='left:832px;top:434px;width:1px;height:106px;background:#080808'></div>
<div class='a' style='left:843px;top:434px;width:1px;height:106px;background:#1c1c1c'></div>
<div class='a' style='left:855px;top:434px;width:1px;height:106px;background:#1c1c1c'></div>
<div class='a' style='left:866px;top:434px;width:1px;height:106px;background:#1c1c1c'></div>
<div class='a' style='left:877px;top:434px;width:1px;height:106px;background:#080808'></div>
<div class='a' style='left:889px;top:434px;width:1px;height:106px;background:#1c1c1c'></div>
<div class='a' style='left:900px;top:434px;width:1px;height:106px;background:#1c1c1c'></div>
<div class='a' style='left:911px;top:434px;width:1px;height:106px;background:#1c1c1c'></div>
<div class='a' style='left:923px;top:434px;width:1px;height:106px;background:#080808'></div>
<div class='a' style='left:934px;top:434px;width:1px;height:106px;background:#1c1c1c'></div>
<div class='a' style='left:945px;top:434px;width:1px;height:106px;background:#1c1c1c'></div>
<div class='a' style='left:957px;top:434px;width:1px;height:106px;background:#1c1c1c'></div>
<div class='a' style='left:968px;top:434px;width:1px;height:106px;background:#080808'></div>
<div class='a' style='left:980px;top:434px;width:1px;height:106px;background:#1c1c1c'></div>
<div class='a' style='left:991px;top:434px;width:1px;height:106px;background:#1c1c1c'></div>
<div class='a' style='left:8px;top:540px;width:994px;height:1px;background:#0a0a0a'></div>
<div class='hdr' style='top:434px;height:106px'></div>
<div class='a' style='left:55px;top:435px;width:4px;height:104px;background:#000;outline:1px solid #9a9a9a'></div>
<div class='hname' style='top:439px;letter-spacing:-.25px'>Eden 3</div>
<div class='rec' style='top:448px'>R</div>
<div class='a' style='left:62px;top:541px;width:940px;height:105px;background:#2f2f2f'></div>
<div class='a' style='left:70px;top:541px;width:1px;height:105px;background:#262626'></div>
<div class='a' style='left:82px;top:541px;width:1px;height:105px;background:#262626'></div>
<div class='a' style='left:93px;top:541px;width:1px;height:105px;background:#262626'></div>
<div class='a' style='left:104px;top:541px;width:1px;height:105px;background:#080808'></div>
<div class='a' style='left:116px;top:541px;width:1px;height:105px;background:#262626'></div>
<div class='a' style='left:127px;top:541px;width:1px;height:105px;background:#262626'></div>
<div class='a' style='left:138px;top:541px;width:1px;height:105px;background:#262626'></div>
<div class='a' style='left:150px;top:541px;width:1px;height:105px;background:#080808'></div>
<div class='a' style='left:161px;top:541px;width:1px;height:105px;background:#262626'></div>
<div class='a' style='left:173px;top:541px;width:1px;height:105px;background:#262626'></div>
<div class='a' style='left:184px;top:541px;width:1px;height:105px;background:#262626'></div>
<div class='a' style='left:195px;top:541px;width:1px;height:105px;background:#080808'></div>
<div class='a' style='left:207px;top:541px;width:1px;height:105px;background:#262626'></div>
<div class='a' style='left:218px;top:541px;width:1px;height:105px;background:#262626'></div>
<div class='a' style='left:229px;top:541px;width:1px;height:105px;background:#262626'></div>
<div class='a' style='left:241px;top:541px;width:1px;height:105px;background:#080808'></div>
<div class='a' style='left:252px;top:541px;width:1px;height:105px;background:#262626'></div>
<div class='a' style='left:264px;top:541px;width:1px;height:105px;background:#262626'></div>
<div class='a' style='left:275px;top:541px;width:1px;height:105px;background:#262626'></div>
<div class='a' style='left:286px;top:541px;width:1px;height:105px;background:#080808'></div>
<div class='a' style='left:298px;top:541px;width:1px;height:105px;background:#262626'></div>
<div class='a' style='left:309px;top:541px;width:1px;height:105px;background:#262626'></div>
<div class='a' style='left:320px;top:541px;width:1px;height:105px;background:#262626'></div>
<div class='a' style='left:332px;top:541px;width:1px;height:105px;background:#080808'></div>
<div class='a' style='left:343px;top:541px;width:1px;height:105px;background:#262626'></div>
<div class='a' style='left:354px;top:541px;width:1px;height:105px;background:#262626'></div>
<div class='a' style='left:366px;top:541px;width:1px;height:105px;background:#262626'></div>
<div class='a' style='left:377px;top:541px;width:1px;height:105px;background:#080808'></div>
<div class='a' style='left:389px;top:541px;width:1px;height:105px;background:#262626'></div>
<div class='a' style='left:400px;top:541px;width:1px;height:105px;background:#262626'></div>
<div class='a' style='left:411px;top:541px;width:1px;height:105px;background:#262626'></div>
<div class='a' style='left:423px;top:541px;width:1px;height:105px;background:#080808'></div>
<div class='a' style='left:434px;top:541px;width:1px;height:105px;background:#262626'></div>
<div class='a' style='left:445px;top:541px;width:1px;height:105px;background:#262626'></div>
<div class='a' style='left:457px;top:541px;width:1px;height:105px;background:#262626'></div>
<div class='a' style='left:468px;top:541px;width:1px;height:105px;background:#080808'></div>
<div class='a' style='left:479px;top:541px;width:1px;height:105px;background:#262626'></div>
<div class='a' style='left:491px;top:541px;width:1px;height:105px;background:#262626'></div>
<div class='a' style='left:502px;top:541px;width:1px;height:105px;background:#262626'></div>
<div class='a' style='left:514px;top:541px;width:1px;height:105px;background:#080808'></div>
<div class='a' style='left:525px;top:541px;width:1px;height:105px;background:#262626'></div>
<div class='a' style='left:536px;top:541px;width:1px;height:105px;background:#262626'></div>
<div class='a' style='left:548px;top:541px;width:1px;height:105px;background:#262626'></div>
<div class='a' style='left:559px;top:541px;width:1px;height:105px;background:#080808'></div>
<div class='a' style='left:570px;top:541px;width:1px;height:105px;background:#262626'></div>
<div class='a' style='left:582px;top:541px;width:1px;height:105px;background:#262626'></div>
<div class='a' style='left:593px;top:541px;width:1px;height:105px;background:#262626'></div>
<div class='a' style='left:605px;top:541px;width:1px;height:105px;background:#080808'></div>
<div class='a' style='left:616px;top:541px;width:1px;height:105px;background:#262626'></div>
<div class='a' style='left:627px;top:541px;width:1px;height:105px;background:#262626'></div>
<div class='a' style='left:639px;top:541px;width:1px;height:105px;background:#262626'></div>
<div class='a' style='left:650px;top:541px;width:1px;height:105px;background:#080808'></div>
<div class='a' style='left:661px;top:541px;width:1px;height:105px;background:#262626'></div>
<div class='a' style='left:673px;top:541px;width:1px;height:105px;background:#262626'></div>
<div class='a' style='left:684px;top:541px;width:1px;height:105px;background:#262626'></div>
<div class='a' style='left:695px;top:541px;width:1px;height:105px;background:#080808'></div>
<div class='a' style='left:707px;top:541px;width:1px;height:105px;background:#262626'></div>
<div class='a' style='left:718px;top:541px;width:1px;height:105px;background:#262626'></div>
<div class='a' style='left:730px;top:541px;width:1px;height:105px;background:#262626'></div>
<div class='a' style='left:741px;top:541px;width:1px;height:105px;background:#080808'></div>
<div class='a' style='left:752px;top:541px;width:1px;height:105px;background:#262626'></div>
<div class='a' style='left:764px;top:541px;width:1px;height:105px;background:#262626'></div>
<div class='a' style='left:775px;top:541px;width:1px;height:105px;background:#262626'></div>
<div class='a' style='left:786px;top:541px;width:1px;height:105px;background:#080808'></div>
<div class='a' style='left:798px;top:541px;width:1px;height:105px;background:#262626'></div>
<div class='a' style='left:809px;top:541px;width:1px;height:105px;background:#262626'></div>
<div class='a' style='left:820px;top:541px;width:1px;height:105px;background:#262626'></div>
<div class='a' style='left:832px;top:541px;width:1px;height:105px;background:#080808'></div>
<div class='a' style='left:843px;top:541px;width:1px;height:105px;background:#262626'></div>
<div class='a' style='left:855px;top:541px;width:1px;height:105px;background:#262626'></div>
<div class='a' style='left:866px;top:541px;width:1px;height:105px;background:#262626'></div>
<div class='a' style='left:877px;top:541px;width:1px;height:105px;background:#080808'></div>
<div class='a' style='left:889px;top:541px;width:1px;height:105px;background:#262626'></div>
<div class='a' style='left:900px;top:541px;width:1px;height:105px;background:#262626'></div>
<div class='a' style='left:911px;top:541px;width:1px;height:105px;background:#262626'></div>
<div class='a' style='left:923px;top:541px;width:1px;height:105px;background:#080808'></div>
<div class='a' style='left:934px;top:541px;width:1px;height:105px;background:#262626'></div>
<div class='a' style='left:945px;top:541px;width:1px;height:105px;background:#262626'></div>
<div class='a' style='left:957px;top:541px;width:1px;height:105px;background:#262626'></div>
<div class='a' style='left:968px;top:541px;width:1px;height:105px;background:#080808'></div>
<div class='a' style='left:980px;top:541px;width:1px;height:105px;background:#262626'></div>
<div class='a' style='left:991px;top:541px;width:1px;height:105px;background:#262626'></div>
<div class='a' style='left:8px;top:646px;width:994px;height:1px;background:#0a0a0a'></div>
<div class='hdr' style='top:541px;height:105px'></div>
<div class='a' style='left:55px;top:542px;width:4px;height:103px;background:#000;outline:1px solid #9a9a9a'></div>
<div class='hname' style='top:545px;letter-spacing:-.25px'>Eden 4</div>
<div class='rec' style='top:554px'>R</div>
<div class='a' style='left:62px;top:647px;width:940px;height:107px;background:#232323'></div>
<div class='a' style='left:70px;top:647px;width:1px;height:107px;background:#1c1c1c'></div>
<div class='a' style='left:82px;top:647px;width:1px;height:107px;background:#1c1c1c'></div>
<div class='a' style='left:93px;top:647px;width:1px;height:107px;background:#1c1c1c'></div>
<div class='a' style='left:104px;top:647px;width:1px;height:107px;background:#080808'></div>
<div class='a' style='left:116px;top:647px;width:1px;height:107px;background:#1c1c1c'></div>
<div class='a' style='left:127px;top:647px;width:1px;height:107px;background:#1c1c1c'></div>
<div class='a' style='left:138px;top:647px;width:1px;height:107px;background:#1c1c1c'></div>
<div class='a' style='left:150px;top:647px;width:1px;height:107px;background:#080808'></div>
<div class='a' style='left:161px;top:647px;width:1px;height:107px;background:#1c1c1c'></div>
<div class='a' style='left:173px;top:647px;width:1px;height:107px;background:#1c1c1c'></div>
<div class='a' style='left:184px;top:647px;width:1px;height:107px;background:#1c1c1c'></div>
<div class='a' style='left:195px;top:647px;width:1px;height:107px;background:#080808'></div>
<div class='a' style='left:207px;top:647px;width:1px;height:107px;background:#1c1c1c'></div>
<div class='a' style='left:218px;top:647px;width:1px;height:107px;background:#1c1c1c'></div>
<div class='a' style='left:229px;top:647px;width:1px;height:107px;background:#1c1c1c'></div>
<div class='a' style='left:241px;top:647px;width:1px;height:107px;background:#080808'></div>
<div class='a' style='left:252px;top:647px;width:1px;height:107px;background:#1c1c1c'></div>
<div class='a' style='left:264px;top:647px;width:1px;height:107px;background:#1c1c1c'></div>
<div class='a' style='left:275px;top:647px;width:1px;height:107px;background:#1c1c1c'></div>
<div class='a' style='left:286px;top:647px;width:1px;height:107px;background:#080808'></div>
<div class='a' style='left:298px;top:647px;width:1px;height:107px;background:#1c1c1c'></div>
<div class='a' style='left:309px;top:647px;width:1px;height:107px;background:#1c1c1c'></div>
<div class='a' style='left:320px;top:647px;width:1px;height:107px;background:#1c1c1c'></div>
<div class='a' style='left:332px;top:647px;width:1px;height:107px;background:#080808'></div>
<div class='a' style='left:343px;top:647px;width:1px;height:107px;background:#1c1c1c'></div>
<div class='a' style='left:354px;top:647px;width:1px;height:107px;background:#1c1c1c'></div>
<div class='a' style='left:366px;top:647px;width:1px;height:107px;background:#1c1c1c'></div>
<div class='a' style='left:377px;top:647px;width:1px;height:107px;background:#080808'></div>
<div class='a' style='left:389px;top:647px;width:1px;height:107px;background:#1c1c1c'></div>
<div class='a' style='left:400px;top:647px;width:1px;height:107px;background:#1c1c1c'></div>
<div class='a' style='left:411px;top:647px;width:1px;height:107px;background:#1c1c1c'></div>
<div class='a' style='left:423px;top:647px;width:1px;height:107px;background:#080808'></div>
<div class='a' style='left:434px;top:647px;width:1px;height:107px;background:#1c1c1c'></div>
<div class='a' style='left:445px;top:647px;width:1px;height:107px;background:#1c1c1c'></div>
<div class='a' style='left:457px;top:647px;width:1px;height:107px;background:#1c1c1c'></div>
<div class='a' style='left:468px;top:647px;width:1px;height:107px;background:#080808'></div>
<div class='a' style='left:479px;top:647px;width:1px;height:107px;background:#1c1c1c'></div>
<div class='a' style='left:491px;top:647px;width:1px;height:107px;background:#1c1c1c'></div>
<div class='a' style='left:502px;top:647px;width:1px;height:107px;background:#1c1c1c'></div>
<div class='a' style='left:514px;top:647px;width:1px;height:107px;background:#080808'></div>
<div class='a' style='left:525px;top:647px;width:1px;height:107px;background:#1c1c1c'></div>
<div class='a' style='left:536px;top:647px;width:1px;height:107px;background:#1c1c1c'></div>
<div class='a' style='left:548px;top:647px;width:1px;height:107px;background:#1c1c1c'></div>
<div class='a' style='left:559px;top:647px;width:1px;height:107px;background:#080808'></div>
<div class='a' style='left:570px;top:647px;width:1px;height:107px;background:#1c1c1c'></div>
<div class='a' style='left:582px;top:647px;width:1px;height:107px;background:#1c1c1c'></div>
<div class='a' style='left:593px;top:647px;width:1px;height:107px;background:#1c1c1c'></div>
<div class='a' style='left:605px;top:647px;width:1px;height:107px;background:#080808'></div>
<div class='a' style='left:616px;top:647px;width:1px;height:107px;background:#1c1c1c'></div>
<div class='a' style='left:627px;top:647px;width:1px;height:107px;background:#1c1c1c'></div>
<div class='a' style='left:639px;top:647px;width:1px;height:107px;background:#1c1c1c'></div>
<div class='a' style='left:650px;top:647px;width:1px;height:107px;background:#080808'></div>
<div class='a' style='left:661px;top:647px;width:1px;height:107px;background:#1c1c1c'></div>
<div class='a' style='left:673px;top:647px;width:1px;height:107px;background:#1c1c1c'></div>
<div class='a' style='left:684px;top:647px;width:1px;height:107px;background:#1c1c1c'></div>
<div class='a' style='left:695px;top:647px;width:1px;height:107px;background:#080808'></div>
<div class='a' style='left:707px;top:647px;width:1px;height:107px;background:#1c1c1c'></div>
<div class='a' style='left:718px;top:647px;width:1px;height:107px;background:#1c1c1c'></div>
<div class='a' style='left:730px;top:647px;width:1px;height:107px;background:#1c1c1c'></div>
<div class='a' style='left:741px;top:647px;width:1px;height:107px;background:#080808'></div>
<div class='a' style='left:752px;top:647px;width:1px;height:107px;background:#1c1c1c'></div>
<div class='a' style='left:764px;top:647px;width:1px;height:107px;background:#1c1c1c'></div>
<div class='a' style='left:775px;top:647px;width:1px;height:107px;background:#1c1c1c'></div>
<div class='a' style='left:786px;top:647px;width:1px;height:107px;background:#080808'></div>
<div class='a' style='left:798px;top:647px;width:1px;height:107px;background:#1c1c1c'></div>
<div class='a' style='left:809px;top:647px;width:1px;height:107px;background:#1c1c1c'></div>
<div class='a' style='left:820px;top:647px;width:1px;height:107px;background:#1c1c1c'></div>
<div class='a' style='left:832px;top:647px;width:1px;height:107px;background:#080808'></div>
<div class='a' style='left:843px;top:647px;width:1px;height:107px;background:#1c1c1c'></div>
<div class='a' style='left:855px;top:647px;width:1px;height:107px;background:#1c1c1c'></div>
<div class='a' style='left:866px;top:647px;width:1px;height:107px;background:#1c1c1c'></div>
<div class='a' style='left:877px;top:647px;width:1px;height:107px;background:#080808'></div>
<div class='a' style='left:889px;top:647px;width:1px;height:107px;background:#1c1c1c'></div>
<div class='a' style='left:900px;top:647px;width:1px;height:107px;background:#1c1c1c'></div>
<div class='a' style='left:911px;top:647px;width:1px;height:107px;background:#1c1c1c'></div>
<div class='a' style='left:923px;top:647px;width:1px;height:107px;background:#080808'></div>
<div class='a' style='left:934px;top:647px;width:1px;height:107px;background:#1c1c1c'></div>
<div class='a' style='left:945px;top:647px;width:1px;height:107px;background:#1c1c1c'></div>
<div class='a' style='left:957px;top:647px;width:1px;height:107px;background:#1c1c1c'></div>
<div class='a' style='left:968px;top:647px;width:1px;height:107px;background:#080808'></div>
<div class='a' style='left:980px;top:647px;width:1px;height:107px;background:#1c1c1c'></div>
<div class='a' style='left:991px;top:647px;width:1px;height:107px;background:#1c1c1c'></div>
<div class='a' style='left:8px;top:754px;width:994px;height:1px;background:#0a0a0a'></div>
<div class='hdr' style='top:647px;height:107px'></div>
<div class='a' style='left:55px;top:648px;width:4px;height:105px;background:#000;outline:1px solid #9a9a9a'></div>
<div class='hname' style='top:652px;letter-spacing:-.25px'>Pads</div>
<div class='rec' style='top:661px'>R</div>
<div class='a' style='left:12px;top:128px;width:3px;height:13px;background:#151515'></div><div class='a' style='left:11px;top:135px;width:5px;height:4px;background:#151515;border-radius:1px'></div><div class='a' style='left:16px;top:128px;width:3px;height:13px;background:#151515'></div><div class='a' style='left:15px;top:132px;width:5px;height:4px;background:#151515;border-radius:1px'></div><div class='a' style='left:20px;top:128px;width:3px;height:13px;background:#151515'></div><div class='a' style='left:19px;top:130px;width:5px;height:4px;background:#151515;border-radius:1px'></div><div class='a' style='left:13px;top:129px;width:1px;height:11px;background:#eee'></div><div class='a' style='left:12px;top:136px;width:3px;height:2px;background:#f4f4f4'></div><div class='a' style='left:17px;top:129px;width:1px;height:11px;background:#eee'></div><div class='a' style='left:16px;top:133px;width:3px;height:2px;background:#f4f4f4'></div><div class='a' style='left:21px;top:129px;width:1px;height:11px;background:#eee'></div><div class='a' style='left:20px;top:131px;width:3px;height:2px;background:#f4f4f4'></div>
<div class='a' style='left:11px;top:235px;width:13px;height:13px;background:#1a1a1a;border-radius:1px'></div><div class='a' style='left:12px;top:236px;width:3px;height:11px;background:linear-gradient(90deg,#f4f4f4,#dcdcdc)'></div><div class='a' style='left:16px;top:236px;width:3px;height:11px;background:linear-gradient(90deg,#f4f4f4,#dcdcdc)'></div><div class='a' style='left:20px;top:236px;width:3px;height:11px;background:linear-gradient(90deg,#f4f4f4,#dcdcdc)'></div><div class='a' style='left:14px;top:236px;width:3px;height:6px;background:#1a1a1a'></div><div class='a' style='left:18px;top:236px;width:3px;height:6px;background:#1a1a1a'></div>
<div class='a' style='left:11px;top:341px;width:13px;height:13px;background:#1a1a1a;border-radius:1px'></div><div class='a' style='left:12px;top:342px;width:3px;height:11px;background:linear-gradient(90deg,#f4f4f4,#dcdcdc)'></div><div class='a' style='left:16px;top:342px;width:3px;height:11px;background:linear-gradient(90deg,#f4f4f4,#dcdcdc)'></div><div class='a' style='left:20px;top:342px;width:3px;height:11px;background:linear-gradient(90deg,#f4f4f4,#dcdcdc)'></div><div class='a' style='left:14px;top:342px;width:3px;height:6px;background:#1a1a1a'></div><div class='a' style='left:18px;top:342px;width:3px;height:6px;background:#1a1a1a'></div>
<div class='a' style='left:11px;top:448px;width:13px;height:13px;background:#1a1a1a;border-radius:1px'></div><div class='a' style='left:12px;top:449px;width:3px;height:11px;background:linear-gradient(90deg,#f4f4f4,#dcdcdc)'></div><div class='a' style='left:16px;top:449px;width:3px;height:11px;background:linear-gradient(90deg,#f4f4f4,#dcdcdc)'></div><div class='a' style='left:20px;top:449px;width:3px;height:11px;background:linear-gradient(90deg,#f4f4f4,#dcdcdc)'></div><div class='a' style='left:14px;top:449px;width:3px;height:6px;background:#1a1a1a'></div><div class='a' style='left:18px;top:449px;width:3px;height:6px;background:#1a1a1a'></div>
<div class='a' style='left:11px;top:554px;width:13px;height:13px;background:#1a1a1a;border-radius:1px'></div><div class='a' style='left:12px;top:555px;width:3px;height:11px;background:linear-gradient(90deg,#f4f4f4,#dcdcdc)'></div><div class='a' style='left:16px;top:555px;width:3px;height:11px;background:linear-gradient(90deg,#f4f4f4,#dcdcdc)'></div><div class='a' style='left:20px;top:555px;width:3px;height:11px;background:linear-gradient(90deg,#f4f4f4,#dcdcdc)'></div><div class='a' style='left:14px;top:555px;width:3px;height:6px;background:#1a1a1a'></div><div class='a' style='left:18px;top:555px;width:3px;height:6px;background:#1a1a1a'></div>
<div class='a' style='left:11px;top:661px;width:13px;height:13px;background:#1a1a1a'></div>
<div class='a' style='left:12px;top:662px;width:3px;height:3px;background:#f2f2f2'></div>
<div class='a' style='left:12px;top:666px;width:3px;height:3px;background:#f2f2f2'></div>
<div class='a' style='left:12px;top:670px;width:3px;height:3px;background:#f2f2f2'></div>
<div class='a' style='left:16px;top:662px;width:3px;height:3px;background:#f2f2f2'></div>
<div class='a' style='left:16px;top:666px;width:3px;height:3px;background:#f2f2f2'></div>
<div class='a' style='left:16px;top:670px;width:3px;height:3px;background:#f2f2f2'></div>
<div class='a' style='left:20px;top:662px;width:3px;height:3px;background:#f2f2f2'></div>
<div class='a' style='left:20px;top:666px;width:3px;height:3px;background:#f2f2f2'></div>
<div class='a' style='left:20px;top:670px;width:3px;height:3px;background:#f2f2f2'></div>
<svg class='a' style='left:9px;top:748px' width='6' height='6'><path d='M0 0L5 5.5H0z' fill='#000'/></svg>
<div class='a' style='left:8px;top:115px;width:1px;height:639px;background:#000'></div>
<div class='a' style='left:60px;top:115px;width:1px;height:639px;background:#000'></div>
<div class='a' style='left:61px;top:109px;width:1px;height:645px;background:#e8e8e8'></div>
<div class='clip' style='left:242px;top:222px;width:103px;height:105px;border-left:1px solid #130d0d;background:linear-gradient(#4199c6,#0782c0)'><div class='cl'>Guitar Solo A</div></div>
<div class='clip' style='left:469px;top:222px;width:92px;height:105px;border-left:1px solid #130d0d;background:linear-gradient(#4199c6,#0782c0)'><div class='cl'>Guitar Solo A</div></div>
<div class='clip' style='left:560px;top:222px;width:92px;height:105px;border-left:1px solid #130d0d;background:linear-gradient(#4199c6,#0782c0)'><div class='cl'>Guitar Solo A</div></div>
<div class='clip' style='left:651px;top:222px;width:92px;height:105px;border-left:1px solid #130d0d;background:linear-gradient(#4199c6,#0782c0)'><div class='cl'>Guitar Solo A</div></div>
<div class='clip' style='left:742px;top:222px;width:103px;height:105px;border-left:1px solid #130d0d;background:linear-gradient(#4199c6,#0782c0)'><div class='cl'>Guitar Solo A</div></div>
<div class='clip' style='left:62px;top:328px;width:499px;height:105px;border-left:0;background:linear-gradient(#98b65e,#6e8a2c)'><div class='cl'>05</div></div>
<div class='clip' style='left:560px;top:328px;width:183px;height:105px;border-left:1px solid #130d0d;background:linear-gradient(#98b65e,#6e8a2c)'><div class='cl'>05</div></div>
<div class='clip' style='left:742px;top:328px;width:92px;height:105px;border-left:1px solid #130d0d;background:linear-gradient(#98b65e,#6e8a2c)'><div class='cl'>05</div></div>
<div class='clip' style='left:833px;top:328px;width:12px;height:105px;border-left:1px solid #130d0d;background:linear-gradient(#4199c6,#0782c0)'></div>
<div class='clip' style='left:469px;top:435px;width:103px;height:105px;border-left:1px solid #130d0d;background:linear-gradient(#4199c6,#0782c0)'></div>
<div class='clip' style='left:151px;top:541px;width:228px;height:105px;border-left:1px solid #130d0d;background:linear-gradient(#b4575f,#892833)'><div class='cl'>08</div></div>
<div class='clip' style='left:378px;top:541px;width:183px;height:105px;border-left:1px solid #130d0d;background:linear-gradient(#4199c6,#0782c0)'></div>
<div class='clip' style='left:560px;top:541px;width:183px;height:105px;border-left:1px solid #130d0d;background:linear-gradient(#4199c6,#0782c0)'></div>
<div class='clip' style='left:62px;top:648px;width:67px;height:105px;border-left:0;background:linear-gradient(#b27454,#8a4826)'><div class='cl'>07</div></div>
<div class='clip' style='left:128px;top:648px;width:24px;height:105px;border-left:1px solid #130d0d;background:linear-gradient(#b450a8,#892a82)'><div class='cl'>02</div></div>
<div class='clip' style='left:151px;top:648px;width:46px;height:105px;border-left:1px solid #130d0d;background:linear-gradient(#b27454,#8a4826)'><div class='cl'>07</div></div>
<div class='clip' style='left:196px;top:648px;width:24px;height:105px;border-left:1px solid #130d0d;background:linear-gradient(#5653b4,#2b2a8a)'><div class='cl'>03</div></div>
<div class='clip' style='left:219px;top:648px;width:24px;height:105px;border-left:1px solid #130d0d;background:linear-gradient(#56ac9c,#2a8070)'><div class='cl'>04</div></div>
<div class='clip' style='left:242px;top:648px;width:69px;height:105px;border-left:1px solid #130d0d;background:linear-gradient(#b27454,#8a4826)'><div class='cl'>07</div></div>
<div class='clip' style='left:310px;top:648px;width:24px;height:105px;border-left:1px solid #130d0d;background:linear-gradient(#56ac9c,#2a8070)'><div class='cl'>04</div></div>
<div class='clip' style='left:333px;top:648px;width:46px;height:105px;border-left:1px solid #130d0d;background:linear-gradient(#b27454,#8a4826)'><div class='cl'>07</div></div>
<div class='clip' style='left:378px;top:648px;width:24px;height:105px;border-left:1px solid #130d0d;background:linear-gradient(#5653b4,#2b2a8a)'><div class='cl'>03</div></div>
<div class='clip' style='left:401px;top:648px;width:24px;height:105px;border-left:1px solid #130d0d;background:linear-gradient(#56ac9c,#2a8070)'><div class='cl'>04</div></div>
<div class='clip' style='left:424px;top:648px;width:137px;height:105px;border-left:1px solid #130d0d;background:linear-gradient(#4199c6,#0782c0)'></div>
<div class='clip' style='left:560px;top:648px;width:47px;height:105px;border-left:1px solid #130d0d;background:linear-gradient(#b27454,#8a4826)'><div class='cl'>07</div></div>
<div class='clip' style='left:606px;top:648px;width:23px;height:105px;border-left:1px solid #130d0d;background:linear-gradient(#5653b4,#2b2a8a)'><div class='cl'>03</div></div>
<div class='clip' style='left:628px;top:648px;width:24px;height:105px;border-left:1px solid #130d0d;background:linear-gradient(#56ac9c,#2a8070)'><div class='cl'>04</div></div>
<div class='clip' style='left:651px;top:648px;width:46px;height:105px;border-left:1px solid #130d0d;background:linear-gradient(#b27454,#8a4826)'><div class='cl'>07</div></div>
<div class='clip' style='left:696px;top:648px;width:24px;height:105px;border-left:1px solid #130d0d;background:linear-gradient(#5653b4,#2b2a8a)'><div class='cl'>03</div></div>
<div class='clip' style='left:719px;top:648px;width:24px;height:105px;border-left:1px solid #130d0d;background:linear-gradient(#56ac9c,#2a8070)'><div class='cl'>04</div></div>
<div class='clip' style='left:742px;top:648px;width:69px;height:105px;border-left:1px solid #130d0d;background:linear-gradient(#b27454,#8a4826)'><div class='cl'>07</div></div>
<div class='clip' style='left:810px;top:648px;width:24px;height:105px;border-left:1px solid #130d0d;background:linear-gradient(#56ac9c,#2a8070)'><div class='cl'>04</div></div>
<i class='n' style='left:328px;top:235px;width:2px;height:1px'></i><i class='n' style='left:257px;top:244px;width:2px;height:1px'></i><i class='n' style='left:280px;top:244px;width:2px;height:1px'></i><i class='n' style='left:303px;top:244px;width:1px;height:1px'></i><i class='n' style='left:326px;top:244px;width:1px;height:1px'></i><i class='n' style='left:256px;top:253px;width:2px;height:1px'></i><i class='n' style='left:279px;top:253px;width:1px;height:1px'></i><i class='n' style='left:302px;top:253px;width:1px;height:1px'></i><i class='n' style='left:248px;top:267px;width:1px;height:1px'></i><i class='n' style='left:270px;top:267px;width:2px;height:1px'></i><i class='n' style='left:293px;top:267px;width:2px;height:1px'></i><i class='n' style='left:316px;top:267px;width:1px;height:1px'></i><i class='n' style='left:255px;top:276px;width:1px;height:1px'></i><i class='n' style='left:260px;top:276px;width:2px;height:1px'></i><i class='n' style='left:277px;top:276px;width:2px;height:1px'></i><i class='n' style='left:300px;top:276px;width:2px;height:1px'></i><i class='n' style='left:306px;top:276px;width:1px;height:1px'></i><i class='n' style='left:323px;top:276px;width:1px;height:1px'></i><i class='n' style='left:245px;top:290px;width:1px;height:1px'></i><i class='n' style='left:267px;top:290px;width:2px;height:1px'></i><i class='n' style='left:290px;top:290px;width:2px;height:1px'></i><i class='n' style='left:313px;top:290px;width:2px;height:1px'></i><i class='n' style='left:253px;top:309px;width:2px;height:1px'></i><i class='n' style='left:276px;top:309px;width:1px;height:1px'></i><i class='n' style='left:299px;top:309px;width:1px;height:1px'></i><i class='n' style='left:321px;top:309px;width:2px;height:1px'></i><i class='n' style='left:265px;top:323px;width:1px;height:1px'></i><i class='n' style='left:287px;top:323px;width:2px;height:1px'></i><i class='n' style='left:310px;top:323px;width:2px;height:1px'></i><i class='n' style='left:331px;top:323px;width:2px;height:1px'></i><i class='n' style='left:828px;top:235px;width:2px;height:1px'></i><i class='n' style='left:757px;top:244px;width:2px;height:1px'></i><i class='n' style='left:780px;top:244px;width:2px;height:1px'></i><i class='n' style='left:803px;top:244px;width:1px;height:1px'></i><i class='n' style='left:826px;top:244px;width:1px;height:1px'></i><i class='n' style='left:756px;top:253px;width:2px;height:1px'></i><i class='n' style='left:779px;top:253px;width:1px;height:1px'></i><i class='n' style='left:802px;top:253px;width:1px;height:1px'></i><i class='n' style='left:748px;top:267px;width:1px;height:1px'></i><i class='n' style='left:770px;top:267px;width:2px;height:1px'></i><i class='n' style='left:793px;top:267px;width:2px;height:1px'></i><i class='n' style='left:816px;top:267px;width:1px;height:1px'></i><i class='n' style='left:755px;top:276px;width:1px;height:1px'></i><i class='n' style='left:760px;top:276px;width:2px;height:1px'></i><i class='n' style='left:777px;top:276px;width:2px;height:1px'></i><i class='n' style='left:800px;top:276px;width:2px;height:1px'></i><i class='n' style='left:806px;top:276px;width:1px;height:1px'></i><i class='n' style='left:823px;top:276px;width:1px;height:1px'></i><i class='n' style='left:745px;top:290px;width:1px;height:1px'></i><i class='n' style='left:767px;top:290px;width:2px;height:1px'></i><i class='n' style='left:790px;top:290px;width:2px;height:1px'></i><i class='n' style='left:813px;top:290px;width:2px;height:1px'></i><i class='n' style='left:753px;top:309px;width:2px;height:1px'></i><i class='n' style='left:776px;top:309px;width:1px;height:1px'></i><i class='n' style='left:799px;top:309px;width:1px;height:1px'></i><i class='n' style='left:821px;top:309px;width:2px;height:1px'></i><i class='n' style='left:765px;top:323px;width:1px;height:1px'></i><i class='n' style='left:787px;top:323px;width:2px;height:1px'></i><i class='n' style='left:810px;top:323px;width:2px;height:1px'></i><i class='n' style='left:831px;top:323px;width:2px;height:1px'></i><i class='n' style='left:480px;top:312px;width:1px;height:12px'></i><i class='n' style='left:489px;top:311px;width:1px;height:13px'></i><i class='n' style='left:518px;top:315px;width:1px;height:9px'></i><i class='n' style='left:523px;top:319px;width:1px;height:5px'></i><i class='n' style='left:527px;top:283px;width:1px;height:41px'></i><i class='n' style='left:529px;top:294px;width:1px;height:30px'></i><i class='n' style='left:538px;top:284px;width:1px;height:40px'></i><i class='n' style='left:539px;top:307px;width:1px;height:17px'></i><i class='n' style='left:541px;top:300px;width:1px;height:24px'></i><i class='n' style='left:543px;top:249px;width:1px;height:75px'></i><i class='n' style='left:547px;top:258px;width:1px;height:66px'></i><i class='n' style='left:549px;top:256px;width:1px;height:68px'></i><i class='n' style='left:557px;top:236px;width:1px;height:88px'></i><i class='n' style='left:565px;top:295px;width:1px;height:29px'></i><i class='n' style='left:570px;top:280px;width:1px;height:44px'></i><i class='n' style='left:574px;top:293px;width:1px;height:31px'></i><i class='n' style='left:579px;top:300px;width:1px;height:24px'></i><i class='n' style='left:583px;top:255px;width:1px;height:69px'></i><i class='n' style='left:588px;top:288px;width:1px;height:36px'></i><i class='n' style='left:600px;top:280px;width:1px;height:44px'></i><i class='n' style='left:606px;top:290px;width:1px;height:34px'></i><i class='n' style='left:612px;top:284px;width:1px;height:40px'></i><i class='n' style='left:620px;top:298px;width:1px;height:26px'></i><i class='n' style='left:625px;top:315px;width:1px;height:9px'></i><i class='n' style='left:629px;top:252px;width:1px;height:72px'></i><i class='n' style='left:637px;top:295px;width:1px;height:29px'></i><i class='n' style='left:643px;top:293px;width:1px;height:31px'></i><i class='n' style='left:672px;top:307px;width:1px;height:17px'></i><i class='n' style='left:677px;top:290px;width:1px;height:34px'></i><i class='n' style='left:680px;top:292px;width:1px;height:32px'></i><i class='n' style='left:682px;top:304px;width:1px;height:20px'></i><i class='n' style='left:687px;top:236px;width:1px;height:88px'></i><i class='n' style='left:690px;top:287px;width:1px;height:37px'></i><i class='n' style='left:695px;top:236px;width:1px;height:88px'></i><i class='n' style='left:706px;top:278px;width:1px;height:46px'></i><i class='n' style='left:712px;top:279px;width:1px;height:45px'></i><i class='n' style='left:719px;top:307px;width:1px;height:17px'></i><i class='n' style='left:723px;top:270px;width:1px;height:54px'></i><i class='n' style='left:726px;top:320px;width:1px;height:4px'></i><i class='n' style='left:728px;top:295px;width:1px;height:29px'></i><i class='n' style='left:732px;top:258px;width:1px;height:66px'></i><i class='n' style='left:741px;top:295px;width:1px;height:29px'></i><i class='n' style='left:504px;top:281px;width:4px;height:1px'></i><i class='n' style='left:512px;top:281px;width:2px;height:1px'></i><i class='n' style='left:536px;top:261px;width:2px;height:1px'></i><i class='n' style='left:596px;top:286px;width:2px;height:1px'></i><i class='n' style='left:634px;top:260px;width:2px;height:1px'></i><i class='n' style='left:660px;top:317px;width:3px;height:1px'></i><i class='n' style='left:685px;top:286px;width:3px;height:1px'></i><i class='n' style='left:74px;top:366px;width:4px;height:1px'></i><i class='n' style='left:80px;top:392px;width:3px;height:1px'></i><i class='n' style='left:63px;top:430px;width:3px;height:1px'></i><i class='n' style='left:69px;top:430px;width:3px;height:1px'></i><i class='n' style='left:97px;top:366px;width:4px;height:1px'></i><i class='n' style='left:103px;top:392px;width:3px;height:1px'></i><i class='n' style='left:86px;top:430px;width:3px;height:1px'></i><i class='n' style='left:92px;top:430px;width:3px;height:1px'></i><i class='n' style='left:119px;top:366px;width:4px;height:1px'></i><i class='n' style='left:125px;top:392px;width:3px;height:1px'></i><i class='n' style='left:108px;top:430px;width:3px;height:1px'></i><i class='n' style='left:114px;top:430px;width:3px;height:1px'></i><i class='n' style='left:142px;top:366px;width:4px;height:1px'></i><i class='n' style='left:148px;top:392px;width:3px;height:1px'></i><i class='n' style='left:131px;top:430px;width:3px;height:1px'></i><i class='n' style='left:137px;top:430px;width:3px;height:1px'></i><i class='n' style='left:165px;top:366px;width:4px;height:1px'></i><i class='n' style='left:171px;top:392px;width:3px;height:1px'></i><i class='n' style='left:154px;top:430px;width:3px;height:1px'></i><i class='n' style='left:160px;top:430px;width:3px;height:1px'></i><i class='n' style='left:188px;top:366px;width:4px;height:1px'></i><i class='n' style='left:194px;top:392px;width:3px;height:1px'></i><i class='n' style='left:177px;top:430px;width:3px;height:1px'></i><i class='n' style='left:183px;top:430px;width:3px;height:1px'></i><i class='n' style='left:210px;top:366px;width:4px;height:1px'></i><i class='n' style='left:216px;top:392px;width:3px;height:1px'></i><i class='n' style='left:199px;top:430px;width:3px;height:1px'></i><i class='n' style='left:205px;top:430px;width:3px;height:1px'></i><i class='n' style='left:233px;top:366px;width:4px;height:1px'></i><i class='n' style='left:239px;top:392px;width:3px;height:1px'></i><i class='n' style='left:222px;top:430px;width:3px;height:1px'></i><i class='n' style='left:228px;top:430px;width:3px;height:1px'></i><i class='n' style='left:256px;top:366px;width:4px;height:1px'></i><i class='n' style='left:262px;top:392px;width:3px;height:1px'></i><i class='n' style='left:245px;top:430px;width:3px;height:1px'></i><i class='n' style='left:251px;top:430px;width:3px;height:1px'></i><i class='n' style='left:279px;top:366px;width:4px;height:1px'></i><i class='n' style='left:285px;top:392px;width:3px;height:1px'></i><i class='n' style='left:268px;top:430px;width:3px;height:1px'></i><i class='n' style='left:274px;top:430px;width:3px;height:1px'></i><i class='n' style='left:301px;top:366px;width:4px;height:1px'></i><i class='n' style='left:307px;top:392px;width:3px;height:1px'></i><i class='n' style='left:290px;top:430px;width:3px;height:1px'></i><i class='n' style='left:296px;top:430px;width:3px;height:1px'></i><i class='n' style='left:324px;top:366px;width:4px;height:1px'></i><i class='n' style='left:330px;top:392px;width:3px;height:1px'></i><i class='n' style='left:313px;top:430px;width:3px;height:1px'></i><i class='n' style='left:319px;top:430px;width:3px;height:1px'></i><i class='n' style='left:347px;top:366px;width:4px;height:1px'></i><i class='n' style='left:353px;top:392px;width:3px;height:1px'></i><i class='n' style='left:336px;top:430px;width:3px;height:1px'></i><i class='n' style='left:342px;top:430px;width:3px;height:1px'></i><i class='n' style='left:369px;top:366px;width:4px;height:1px'></i><i class='n' style='left:375px;top:392px;width:3px;height:1px'></i><i class='n' style='left:358px;top:430px;width:3px;height:1px'></i><i class='n' style='left:364px;top:430px;width:3px;height:1px'></i><i class='n' style='left:392px;top:366px;width:4px;height:1px'></i><i class='n' style='left:398px;top:392px;width:3px;height:1px'></i><i class='n' style='left:381px;top:430px;width:3px;height:1px'></i><i class='n' style='left:387px;top:430px;width:3px;height:1px'></i><i class='n' style='left:415px;top:366px;width:4px;height:1px'></i><i class='n' style='left:421px;top:392px;width:3px;height:1px'></i><i class='n' style='left:404px;top:430px;width:3px;height:1px'></i><i class='n' style='left:410px;top:430px;width:3px;height:1px'></i><i class='n' style='left:438px;top:366px;width:4px;height:1px'></i><i class='n' style='left:444px;top:392px;width:3px;height:1px'></i><i class='n' style='left:427px;top:430px;width:3px;height:1px'></i><i class='n' style='left:433px;top:430px;width:3px;height:1px'></i><i class='n' style='left:460px;top:366px;width:4px;height:1px'></i><i class='n' style='left:466px;top:392px;width:3px;height:1px'></i><i class='n' style='left:449px;top:430px;width:3px;height:1px'></i><i class='n' style='left:455px;top:430px;width:3px;height:1px'></i><i class='n' style='left:483px;top:366px;width:4px;height:1px'></i><i class='n' style='left:489px;top:392px;width:3px;height:1px'></i><i class='n' style='left:472px;top:430px;width:3px;height:1px'></i><i class='n' style='left:478px;top:430px;width:3px;height:1px'></i><i class='n' style='left:506px;top:366px;width:4px;height:1px'></i><i class='n' style='left:512px;top:392px;width:3px;height:1px'></i><i class='n' style='left:495px;top:430px;width:3px;height:1px'></i><i class='n' style='left:501px;top:430px;width:3px;height:1px'></i><i class='n' style='left:529px;top:366px;width:4px;height:1px'></i><i class='n' style='left:535px;top:392px;width:3px;height:1px'></i><i class='n' style='left:518px;top:430px;width:3px;height:1px'></i><i class='n' style='left:524px;top:430px;width:3px;height:1px'></i><i class='n' style='left:551px;top:366px;width:4px;height:1px'></i><i class='n' style='left:557px;top:392px;width:3px;height:1px'></i><i class='n' style='left:540px;top:430px;width:3px;height:1px'></i><i class='n' style='left:546px;top:430px;width:3px;height:1px'></i><i class='n' style='left:574px;top:366px;width:4px;height:1px'></i><i class='n' style='left:580px;top:392px;width:3px;height:1px'></i><i class='n' style='left:563px;top:430px;width:3px;height:1px'></i><i class='n' style='left:569px;top:430px;width:3px;height:1px'></i><i class='n' style='left:597px;top:366px;width:4px;height:1px'></i><i class='n' style='left:603px;top:392px;width:3px;height:1px'></i><i class='n' style='left:586px;top:430px;width:3px;height:1px'></i><i class='n' style='left:592px;top:430px;width:3px;height:1px'></i><i class='n' style='left:620px;top:366px;width:4px;height:1px'></i><i class='n' style='left:626px;top:392px;width:3px;height:1px'></i><i class='n' style='left:609px;top:430px;width:3px;height:1px'></i><i class='n' style='left:615px;top:430px;width:3px;height:1px'></i><i class='n' style='left:642px;top:366px;width:4px;height:1px'></i><i class='n' style='left:648px;top:392px;width:3px;height:1px'></i><i class='n' style='left:631px;top:430px;width:3px;height:1px'></i><i class='n' style='left:637px;top:430px;width:3px;height:1px'></i><i class='n' style='left:665px;top:366px;width:4px;height:1px'></i><i class='n' style='left:671px;top:392px;width:3px;height:1px'></i><i class='n' style='left:654px;top:430px;width:3px;height:1px'></i><i class='n' style='left:660px;top:430px;width:3px;height:1px'></i><i class='n' style='left:688px;top:366px;width:4px;height:1px'></i><i class='n' style='left:694px;top:392px;width:3px;height:1px'></i><i class='n' style='left:677px;top:430px;width:3px;height:1px'></i><i class='n' style='left:683px;top:430px;width:3px;height:1px'></i><i class='n' style='left:710px;top:366px;width:4px;height:1px'></i><i class='n' style='left:716px;top:392px;width:3px;height:1px'></i><i class='n' style='left:699px;top:430px;width:3px;height:1px'></i><i class='n' style='left:705px;top:430px;width:3px;height:1px'></i><i class='n' style='left:733px;top:366px;width:4px;height:1px'></i><i class='n' style='left:739px;top:392px;width:3px;height:1px'></i><i class='n' style='left:722px;top:430px;width:3px;height:1px'></i><i class='n' style='left:728px;top:430px;width:3px;height:1px'></i><i class='n' style='left:756px;top:366px;width:4px;height:1px'></i><i class='n' style='left:762px;top:392px;width:3px;height:1px'></i><i class='n' style='left:745px;top:430px;width:3px;height:1px'></i><i class='n' style='left:751px;top:430px;width:3px;height:1px'></i><i class='n' style='left:779px;top:366px;width:4px;height:1px'></i><i class='n' style='left:785px;top:392px;width:3px;height:1px'></i><i class='n' style='left:768px;top:430px;width:3px;height:1px'></i><i class='n' style='left:774px;top:430px;width:3px;height:1px'></i><i class='n' style='left:801px;top:366px;width:4px;height:1px'></i><i class='n' style='left:807px;top:392px;width:3px;height:1px'></i><i class='n' style='left:790px;top:430px;width:3px;height:1px'></i><i class='n' style='left:796px;top:430px;width:3px;height:1px'></i><i class='n' style='left:824px;top:366px;width:4px;height:1px'></i><i class='n' style='left:830px;top:392px;width:3px;height:1px'></i><i class='n' style='left:813px;top:430px;width:3px;height:1px'></i><i class='n' style='left:819px;top:430px;width:3px;height:1px'></i><i class='n' style='left:151px;top:377px;width:1px;height:54px'></i><i class='n' style='left:242px;top:377px;width:1px;height:54px'></i><i class='n' style='left:333px;top:377px;width:1px;height:54px'></i><i class='n' style='left:424px;top:377px;width:1px;height:54px'></i><i class='n' style='left:515px;top:377px;width:1px;height:54px'></i><i class='n' style='left:651px;top:377px;width:1px;height:54px'></i><i class='n' style='left:471px;top:536px;width:6px;height:1px'></i><i class='n' style='left:493px;top:536px;width:9px;height:1px'></i><i class='n' style='left:482px;top:499px;width:8px;height:1px'></i><i class='n' style='left:505px;top:499px;width:7px;height:1px'></i><i class='n' style='left:512px;top:492px;width:17px;height:1px'></i><i class='n' style='left:527px;top:481px;width:12px;height:1px'></i><i class='n' style='left:539px;top:473px;width:11px;height:1px'></i><i class='n' style='left:549px;top:466px;width:7px;height:1px'></i><i class='n' style='left:554px;top:455px;width:7px;height:1px'></i><i class='n' style='left:560px;top:448px;width:8px;height:1px'></i><i class='n' style='left:195px;top:590px;width:1px;height:54px'></i><i class='n' style='left:241px;top:590px;width:1px;height:54px'></i><i class='n' style='left:286px;top:590px;width:1px;height:54px'></i><i class='n' style='left:332px;top:590px;width:1px;height:54px'></i><i class='n' style='left:152px;top:643px;width:226px;height:1px'></i><i class='n' style='left:421px;top:606px;width:1px;height:38px'></i><i class='n' style='left:427px;top:626px;width:1px;height:18px'></i><i class='n' style='left:430px;top:589px;width:1px;height:55px'></i><i class='n' style='left:435px;top:623px;width:1px;height:21px'></i><i class='n' style='left:438px;top:620px;width:1px;height:24px'></i><i class='n' style='left:441px;top:572px;width:1px;height:72px'></i><i class='n' style='left:445px;top:566px;width:1px;height:78px'></i><i class='n' style='left:451px;top:609px;width:1px;height:35px'></i><i class='n' style='left:462px;top:600px;width:1px;height:44px'></i><i class='n' style='left:469px;top:637px;width:1px;height:7px'></i><i class='n' style='left:475px;top:589px;width:1px;height:55px'></i><i class='n' style='left:483px;top:631px;width:1px;height:13px'></i><i class='n' style='left:506px;top:580px;width:1px;height:64px'></i><i class='n' style='left:513px;top:614px;width:1px;height:30px'></i><i class='n' style='left:516px;top:611px;width:1px;height:33px'></i><i class='n' style='left:528px;top:574px;width:1px;height:70px'></i><i class='n' style='left:540px;top:600px;width:1px;height:44px'></i><i class='n' style='left:543px;top:594px;width:1px;height:50px'></i><i class='n' style='left:546px;top:569px;width:1px;height:75px'></i><i class='n' style='left:549px;top:579px;width:1px;height:65px'></i><i class='n' style='left:550px;top:624px;width:1px;height:20px'></i><i class='n' style='left:553px;top:555px;width:1px;height:89px'></i><i class='n' style='left:556px;top:555px;width:1px;height:89px'></i><i class='n' style='left:558px;top:555px;width:1px;height:89px'></i><i class='n' style='left:380px;top:643px;width:90px;height:1px'></i><i class='n' style='left:494px;top:643px;width:23px;height:1px'></i><i class='n' style='left:603px;top:606px;width:1px;height:38px'></i><i class='n' style='left:609px;top:626px;width:1px;height:18px'></i><i class='n' style='left:612px;top:589px;width:1px;height:55px'></i><i class='n' style='left:617px;top:623px;width:1px;height:21px'></i><i class='n' style='left:620px;top:620px;width:1px;height:24px'></i><i class='n' style='left:623px;top:572px;width:1px;height:72px'></i><i class='n' style='left:627px;top:566px;width:1px;height:78px'></i><i class='n' style='left:633px;top:609px;width:1px;height:35px'></i><i class='n' style='left:644px;top:600px;width:1px;height:44px'></i><i class='n' style='left:651px;top:637px;width:1px;height:7px'></i><i class='n' style='left:657px;top:589px;width:1px;height:55px'></i><i class='n' style='left:665px;top:631px;width:1px;height:13px'></i><i class='n' style='left:688px;top:580px;width:1px;height:64px'></i><i class='n' style='left:695px;top:614px;width:1px;height:30px'></i><i class='n' style='left:698px;top:611px;width:1px;height:33px'></i><i class='n' style='left:710px;top:574px;width:1px;height:70px'></i><i class='n' style='left:722px;top:600px;width:1px;height:44px'></i><i class='n' style='left:725px;top:594px;width:1px;height:50px'></i><i class='n' style='left:728px;top:569px;width:1px;height:75px'></i><i class='n' style='left:731px;top:579px;width:1px;height:65px'></i><i class='n' style='left:732px;top:624px;width:1px;height:20px'></i><i class='n' style='left:735px;top:555px;width:1px;height:89px'></i><i class='n' style='left:738px;top:555px;width:1px;height:89px'></i><i class='n' style='left:740px;top:555px;width:1px;height:89px'></i><i class='n' style='left:562px;top:643px;width:90px;height:1px'></i><i class='n' style='left:676px;top:643px;width:23px;height:1px'></i><i class='n' style='left:90px;top:661px;width:2px;height:1px'></i><i class='n' style='left:105px;top:661px;width:2px;height:1px'></i><i class='n' style='left:68px;top:734px;width:3px;height:1px'></i><i class='n' style='left:74px;top:734px;width:2px;height:1px'></i><i class='n' style='left:80px;top:734px;width:2px;height:1px'></i><i class='n' style='left:94px;top:734px;width:3px;height:1px'></i><i class='n' style='left:100px;top:734px;width:2px;height:1px'></i><i class='n' style='left:110px;top:734px;width:2px;height:1px'></i><i class='n' style='left:85px;top:742px;width:2px;height:1px'></i><i class='n' style='left:65px;top:749px;width:2px;height:1px'></i><i class='n' style='left:116px;top:749px;width:2px;height:1px'></i><i class='n' style='left:122px;top:749px;width:2px;height:1px'></i><i class='n' style='left:134px;top:735px;width:3px;height:1px'></i><i class='n' style='left:144px;top:735px;width:3px;height:1px'></i><i class='n' style='left:149px;top:742px;width:1px;height:1px'></i><i class='n' style='left:139px;top:749px;width:2px;height:1px'></i><i class='n' style='left:180px;top:661px;width:2px;height:1px'></i><i class='n' style='left:158px;top:734px;width:3px;height:1px'></i><i class='n' style='left:164px;top:734px;width:2px;height:1px'></i><i class='n' style='left:170px;top:734px;width:2px;height:1px'></i><i class='n' style='left:184px;top:734px;width:3px;height:1px'></i><i class='n' style='left:190px;top:734px;width:2px;height:1px'></i><i class='n' style='left:175px;top:742px;width:2px;height:1px'></i><i class='n' style='left:155px;top:749px;width:2px;height:1px'></i><i class='n' style='left:200px;top:683px;width:2px;height:1px'></i><i class='n' style='left:213px;top:697px;width:1px;height:1px'></i><i class='n' style='left:206px;top:749px;width:2px;height:1px'></i><i class='n' style='left:225px;top:661px;width:3px;height:1px'></i><i class='n' style='left:237px;top:715px;width:1px;height:1px'></i><i class='n' style='left:233px;top:742px;width:1px;height:1px'></i><i class='n' style='left:240px;top:742px;width:1px;height:1px'></i><i class='n' style='left:271px;top:661px;width:2px;height:1px'></i><i class='n' style='left:286px;top:661px;width:2px;height:1px'></i><i class='n' style='left:248px;top:734px;width:3px;height:1px'></i><i class='n' style='left:255px;top:734px;width:2px;height:1px'></i><i class='n' style='left:261px;top:734px;width:2px;height:1px'></i><i class='n' style='left:275px;top:734px;width:3px;height:1px'></i><i class='n' style='left:281px;top:734px;width:2px;height:1px'></i><i class='n' style='left:291px;top:734px;width:2px;height:1px'></i><i class='n' style='left:266px;top:742px;width:2px;height:1px'></i><i class='n' style='left:246px;top:749px;width:2px;height:1px'></i><i class='n' style='left:297px;top:749px;width:2px;height:1px'></i><i class='n' style='left:303px;top:749px;width:2px;height:1px'></i><i class='n' style='left:308px;top:749px;width:2px;height:1px'></i><i class='n' style='left:316px;top:661px;width:3px;height:1px'></i><i class='n' style='left:328px;top:715px;width:1px;height:1px'></i><i class='n' style='left:324px;top:742px;width:1px;height:1px'></i><i class='n' style='left:331px;top:742px;width:1px;height:1px'></i><i class='n' style='left:362px;top:661px;width:2px;height:1px'></i><i class='n' style='left:340px;top:734px;width:3px;height:1px'></i><i class='n' style='left:346px;top:734px;width:2px;height:1px'></i><i class='n' style='left:352px;top:734px;width:2px;height:1px'></i><i class='n' style='left:366px;top:734px;width:3px;height:1px'></i><i class='n' style='left:372px;top:734px;width:2px;height:1px'></i><i class='n' style='left:357px;top:742px;width:2px;height:1px'></i><i class='n' style='left:337px;top:749px;width:2px;height:1px'></i><i class='n' style='left:382px;top:683px;width:2px;height:1px'></i><i class='n' style='left:395px;top:697px;width:1px;height:1px'></i><i class='n' style='left:388px;top:749px;width:2px;height:1px'></i><i class='n' style='left:407px;top:661px;width:3px;height:1px'></i><i class='n' style='left:419px;top:715px;width:1px;height:1px'></i><i class='n' style='left:415px;top:742px;width:1px;height:1px'></i><i class='n' style='left:422px;top:742px;width:1px;height:1px'></i><i class='n' style='left:454px;top:661px;width:1px;height:1px'></i><i class='n' style='left:490px;top:661px;width:2px;height:1px'></i><i class='n' style='left:499px;top:661px;width:1px;height:1px'></i><i class='n' style='left:513px;top:661px;width:2px;height:1px'></i><i class='n' style='left:536px;top:661px;width:1px;height:1px'></i><i class='n' style='left:544px;top:661px;width:2px;height:1px'></i><i class='n' style='left:509px;top:668px;width:1px;height:1px'></i><i class='n' style='left:554px;top:668px;width:2px;height:1px'></i><i class='n' style='left:469px;top:675px;width:2px;height:1px'></i><i class='n' style='left:509px;top:675px;width:1px;height:1px'></i><i class='n' style='left:515px;top:675px;width:1px;height:1px'></i><i class='n' style='left:554px;top:675px;width:2px;height:1px'></i><i class='n' style='left:554px;top:697px;width:4px;height:1px'></i><i class='n' style='left:455px;top:742px;width:2px;height:1px'></i><i class='n' style='left:489px;top:742px;width:3px;height:1px'></i><i class='n' style='left:500px;top:742px;width:2px;height:1px'></i><i class='n' style='left:512px;top:742px;width:1px;height:1px'></i><i class='n' style='left:536px;top:742px;width:2px;height:1px'></i><i class='n' style='left:546px;top:742px;width:1px;height:1px'></i><i class='n' style='left:557px;top:742px;width:2px;height:1px'></i><i class='n' style='left:425px;top:749px;width:1px;height:1px'></i><i class='n' style='left:469px;top:749px;width:2px;height:1px'></i><i class='n' style='left:492px;top:749px;width:2px;height:1px'></i><i class='n' style='left:515px;top:749px;width:2px;height:1px'></i><i class='n' style='left:537px;top:749px;width:2px;height:1px'></i><i class='n' style='left:554px;top:749px;width:2px;height:1px'></i><i class='n' style='left:589px;top:661px;width:2px;height:1px'></i><i class='n' style='left:604px;top:661px;width:2px;height:1px'></i><i class='n' style='left:566px;top:734px;width:3px;height:1px'></i><i class='n' style='left:573px;top:734px;width:2px;height:1px'></i><i class='n' style='left:579px;top:734px;width:2px;height:1px'></i><i class='n' style='left:593px;top:734px;width:3px;height:1px'></i><i class='n' style='left:599px;top:734px;width:2px;height:1px'></i><i class='n' style='left:584px;top:742px;width:2px;height:1px'></i><i class='n' style='left:564px;top:749px;width:2px;height:1px'></i><i class='n' style='left:610px;top:683px;width:2px;height:1px'></i><i class='n' style='left:623px;top:697px;width:1px;height:1px'></i><i class='n' style='left:616px;top:749px;width:2px;height:1px'></i><i class='n' style='left:634px;top:661px;width:3px;height:1px'></i><i class='n' style='left:646px;top:715px;width:1px;height:1px'></i><i class='n' style='left:642px;top:742px;width:1px;height:1px'></i><i class='n' style='left:649px;top:742px;width:1px;height:1px'></i><i class='n' style='left:680px;top:661px;width:2px;height:1px'></i><i class='n' style='left:658px;top:734px;width:3px;height:1px'></i><i class='n' style='left:664px;top:734px;width:2px;height:1px'></i><i class='n' style='left:670px;top:734px;width:2px;height:1px'></i><i class='n' style='left:684px;top:734px;width:3px;height:1px'></i><i class='n' style='left:690px;top:734px;width:2px;height:1px'></i><i class='n' style='left:675px;top:742px;width:2px;height:1px'></i><i class='n' style='left:655px;top:749px;width:2px;height:1px'></i><i class='n' style='left:700px;top:683px;width:2px;height:1px'></i><i class='n' style='left:713px;top:697px;width:1px;height:1px'></i><i class='n' style='left:706px;top:749px;width:2px;height:1px'></i><i class='n' style='left:725px;top:661px;width:3px;height:1px'></i><i class='n' style='left:737px;top:715px;width:1px;height:1px'></i><i class='n' style='left:733px;top:742px;width:1px;height:1px'></i><i class='n' style='left:740px;top:742px;width:1px;height:1px'></i><i class='n' style='left:771px;top:661px;width:2px;height:1px'></i><i class='n' style='left:786px;top:661px;width:2px;height:1px'></i><i class='n' style='left:748px;top:734px;width:3px;height:1px'></i><i class='n' style='left:755px;top:734px;width:2px;height:1px'></i><i class='n' style='left:761px;top:734px;width:2px;height:1px'></i><i class='n' style='left:775px;top:734px;width:3px;height:1px'></i><i class='n' style='left:781px;top:734px;width:2px;height:1px'></i><i class='n' style='left:791px;top:734px;width:2px;height:1px'></i><i class='n' style='left:766px;top:742px;width:2px;height:1px'></i><i class='n' style='left:746px;top:749px;width:2px;height:1px'></i><i class='n' style='left:797px;top:749px;width:2px;height:1px'></i><i class='n' style='left:803px;top:749px;width:2px;height:1px'></i><i class='n' style='left:808px;top:749px;width:2px;height:1px'></i><i class='n' style='left:816px;top:661px;width:3px;height:1px'></i><i class='n' style='left:828px;top:715px;width:1px;height:1px'></i><i class='n' style='left:824px;top:742px;width:1px;height:1px'></i><i class='n' style='left:831px;top:742px;width:1px;height:1px'></i>
<div class='a' style='left:1001px;top:115px;width:31px;height:639px;background:#000'></div>
<div class='a' style='left:1002px;top:115px;width:29px;height:52px;background:linear-gradient(90deg,#565454,#3a3737 45%,#252222);border-bottom:1px solid #6a6868'></div>
<div class='a' style='left:1002px;top:168px;width:29px;height:52px;background:linear-gradient(90deg,#565454,#3a3737 45%,#252222);border-bottom:1px solid #6a6868'></div>
<div class='a' style='left:1013px;top:142px;width:7px;height:2px;background:#d4d4d4'></div><div class='a' style='left:1015px;top:139px;width:2px;height:7px;background:#d4d4d4'></div>
<div class='a' style='left:1015px;top:195px;width:5px;height:2px;background:#d8d8d8'></div>
<div class='a' style='left:1002px;top:221px;width:29px;height:533px;background:#2f2c2c'></div>
<div class='a' style='left:1006px;top:225px;width:21px;height:525px;background:#a9a7a7;border:1px solid #1a1a1a'></div>
<div class='a' style='left:1007px;top:226px;width:19px;height:393px;background:linear-gradient(90deg,#4a4848,#2a2828);border:1px solid #111;border-radius:2px'></div>
<div class='a' style='left:1011px;top:419px;width:10px;height:1px;background:#111'></div>
<div class='a' style='left:1011px;top:422px;width:10px;height:1px;background:#111'></div>
<div class='a' style='left:1011px;top:425px;width:10px;height:1px;background:#111'></div>
<div class='a' style='left:8px;top:754px;width:1024px;height:44px;background:#000'></div>
<div class='bb' style='left:8px;width:114px'><div class='bt' style='top:26px;letter-spacing:.3px'>Tools</div></div>
<div class='bb' style='left:122px;width:114px'><div class='bt' style='top:26px;letter-spacing:.3px'>History</div></div>
<div class='bb' style='left:236px;width:113px'><div class='bt' style='top:26px;letter-spacing:.3px'>Zoom</div></div>
<div class='bb' style='left:349px;width:114px'><div class='bt' style='top:26px;letter-spacing:.3px'>Select</div></div>
<div class='bb' style='left:463px;width:114px'><div class='bt' style='top:26px;letter-spacing:.3px'>Draw</div></div>
<div class='bb' style='left:577px;width:341px'><div class='t' style='left:0;top:16px;width:100%;text-align:center;font-size:11px;color:#e6e6e6'>34/1000 parts used</div></div>
<div class='a' style='left:918px;top:755px;width:114px;height:42px;background:linear-gradient(#222,#111);border-left:1px solid #000'></div>
<div class='a' style='left:966px;top:762px;width:19px;height:13px;border:1px solid #21709e'></div>
<div class='a' style='left:968px;top:765px;width:6px;height:2px;background:#21709e'></div>
<div class='a' style='left:971px;top:768px;width:8px;height:2px;background:#21709e'></div>
<div class='a' style='left:974px;top:771px;width:8px;height:2px;background:#21709e'></div>
<div class='t' style='left:918px;top:781px;width:114px;text-align:center;font-size:13px;color:#7a7a7a;letter-spacing:.3px'>Edit</div>
<svg class='a' style='left:50px;top:756px' width='30' height='24'><defs><linearGradient id='og' x1='0' y1='0' x2='0' y2='1'><stop offset='0' stop-color='#fbb47a'/><stop offset='1' stop-color='#ec7418'/></linearGradient></defs><g stroke='#141414' stroke-width='2' stroke-linejoin='round'><path d='M14.98 4.74A5.2 5.2 0 1 1 10.65 3.98L11.48 7.07A2 2 0 1 0 13.15 7.36Z' fill='#141414'/><line x1='15.8' y1='12.6' x2='21.6' y2='18.4' stroke-width='6'/></g><path d='M14.98 4.74A5.2 5.2 0 1 1 10.65 3.98L11.48 7.07A2 2 0 1 0 13.15 7.36Z' fill='url(#og)'/><line x1='15.8' y1='12.6' x2='21.6' y2='18.4' stroke='url(#og)' stroke-width='4'/></svg>
<svg class='a' style='left:164px;top:756px' width='30' height='24'><defs><linearGradient id='og2' x1='0' y1='0' x2='0' y2='1'><stop offset='0' stop-color='#fbb47a'/><stop offset='1' stop-color='#ec7418'/></linearGradient></defs><path d='M10.5 10.5C12 5.5 20 4.5 21.6 9C22.6 12.5 20.5 16.5 16.5 19' fill='none' stroke='#141414' stroke-width='5'/><path d='M6.8 6.3V14.3H14.5z' fill='#141414' stroke='#141414' stroke-width='1.6' stroke-linejoin='round'/><path d='M10.5 10.5C12 5.5 20 4.5 21.6 9C22.6 12.5 20.5 16.5 16.5 19' fill='none' stroke='url(#og2)' stroke-width='3.2'/><path d='M7 6.8V14H13.8z' fill='url(#og2)'/></svg>
<svg class='a' style='left:278px;top:756px' width='30' height='24'><defs><linearGradient id='og3' x1='0' y1='0' x2='0' y2='1'><stop offset='0' stop-color='#fbb47a'/><stop offset='1' stop-color='#ec7418'/></linearGradient></defs><circle cx='11.9' cy='8.9' r='4.3' fill='none' stroke='#141414' stroke-width='4'/><line x1='16.6' y1='14' x2='21.4' y2='18.6' stroke='#141414' stroke-width='5.4' stroke-linecap='round'/><circle cx='11.9' cy='8.9' r='4.3' fill='none' stroke='url(#og3)' stroke-width='2.1'/><line x1='16.6' y1='14' x2='21.4' y2='18.6' stroke='#ea7a22' stroke-width='3.4' stroke-linecap='round'/><rect x='11' y='6.6' width='2' height='1' fill='#f6a868'/></svg>
<svg class='a' style='left:380px;top:755px' width='40' height='24'><rect x='15.6' y='6.6' width='16' height='10.4' fill='none' stroke='#141414' stroke-width='2.4'/><rect x='15.6' y='6.6' width='16' height='10.4' fill='none' stroke='#f6a05a' stroke-width='1.1' stroke-dasharray='2 1.3'/><path d='M31.5 13V21M27.5 17H36' stroke='#141414' stroke-width='2.6'/><path d='M31.5 13.3V20.7M27.8 17H35.7' stroke='#ee8028' stroke-width='1.2'/></svg>
<svg class='a' style='left:505px;top:756px' width='30' height='24'><defs><linearGradient id='og4' x1='0' y1='0' x2='0' y2='1'><stop offset='0' stop-color='#fbb47a'/><stop offset='1' stop-color='#ec7418'/></linearGradient></defs><path d='M7.8 5L13.8 7.2L23.5 17L20 20.2L10.3 10.4z' fill='#141414' stroke='#141414' stroke-width='1.8' stroke-linejoin='round'/><path d='M8 5.3L13.6 7.5L23 17L20 19.8L10.5 10.2z' fill='url(#og4)'/><path d='M10.6 10.3L13.7 7.4' stroke='#3a2a20' stroke-width='.9'/></svg>
<svg class='a' style='left:0;top:0' width='1040' height='806'><path d='M140 508.5 L141.8 508.5 L96.7 729 L106 726.4 L85.5 751.2 L78 720.2 L85.5 726.4 Z' fill='#e8432a'/></svg>
</body></html>
